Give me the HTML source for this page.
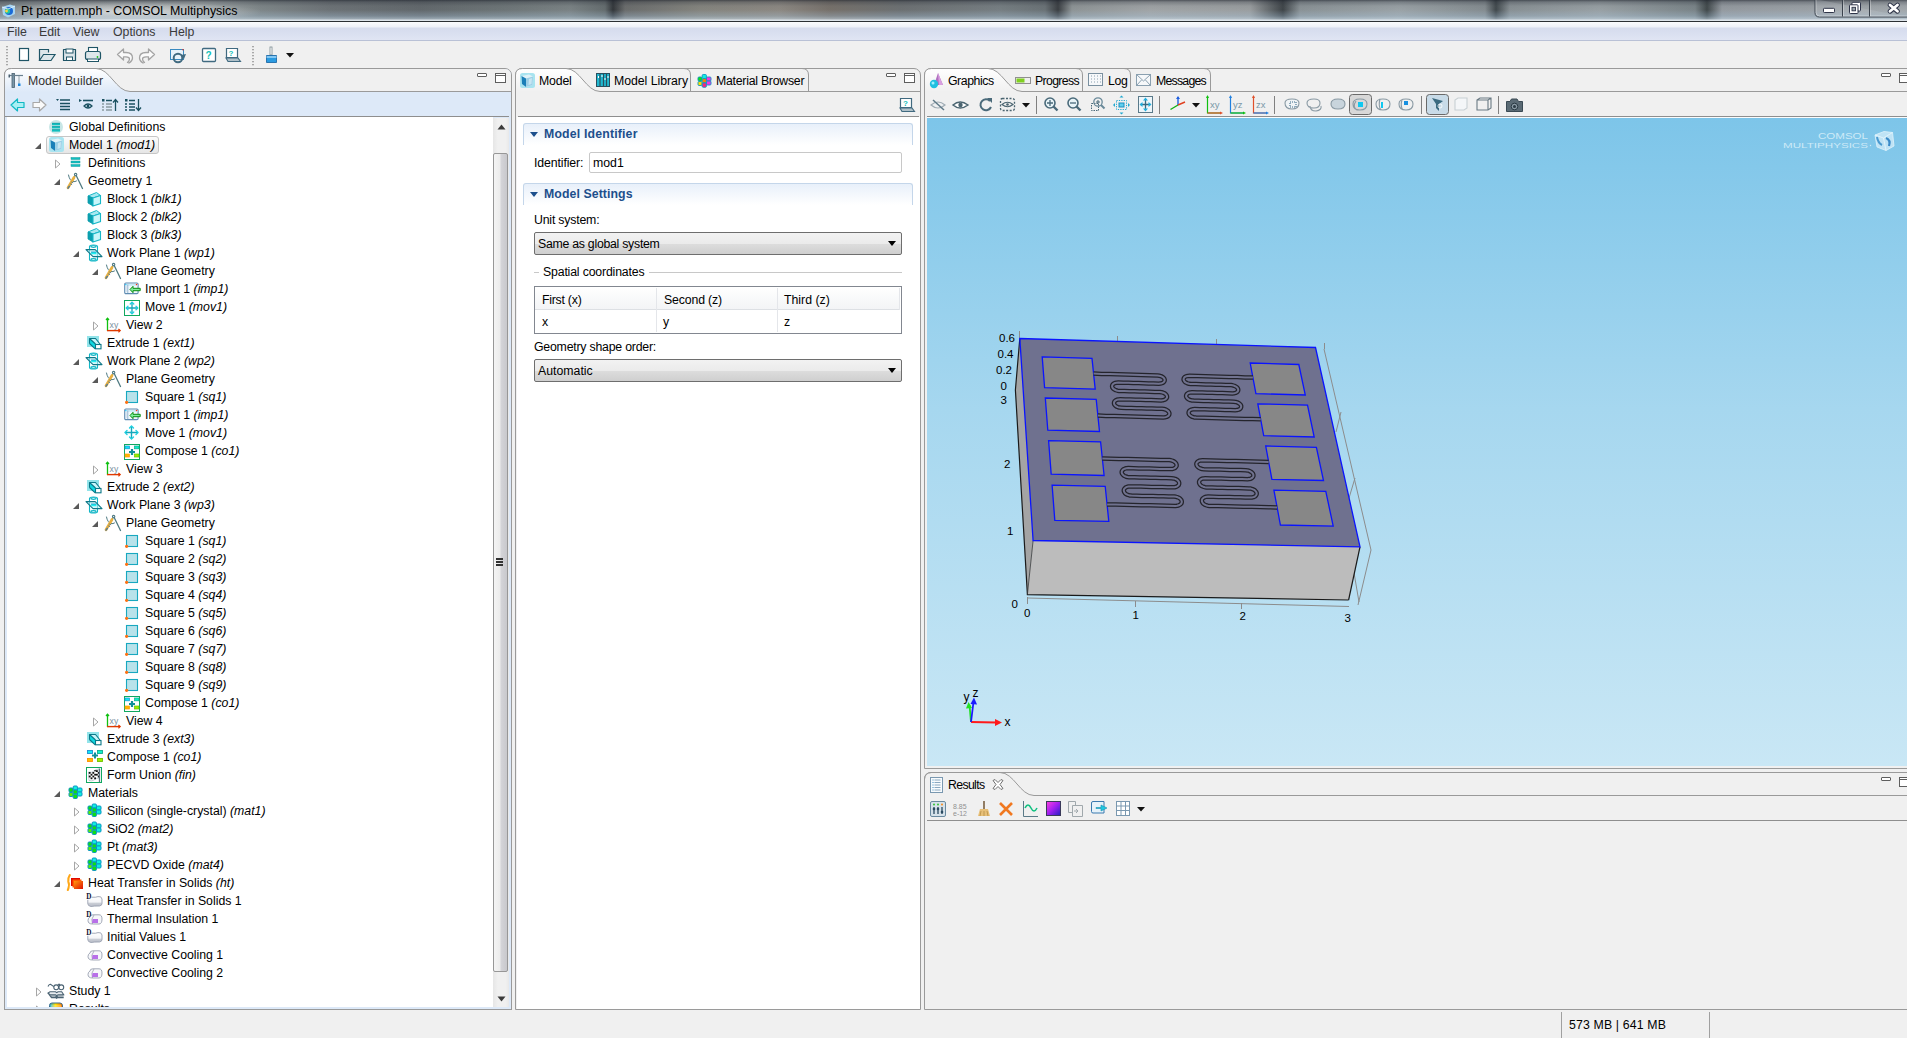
<!DOCTYPE html>
<html><head><meta charset="utf-8">
<style>
*{box-sizing:border-box;margin:0;padding:0}
html,body{width:1907px;height:1038px;overflow:hidden;background:#f0f0f0;font-family:"Liberation Sans",sans-serif;font-size:12.3px;color:#000}
.a{position:absolute}
svg.a{overflow:visible}
.t{position:absolute;white-space:pre;line-height:16px}
.row{position:absolute;height:18px;line-height:18px;white-space:pre}
.row i{font-style:italic}
.sec{position:absolute;left:523px;width:390px;height:22px;border:1px solid #c4d6ea;border-bottom:none;border-radius:3px 3px 0 0;background:linear-gradient(180deg,#e8f0fa 0%,#f6f9fd 60%,#fff 100%)}
.sec span{position:absolute;left:20px;top:3px;font-weight:bold;color:#1d4f8c;font-size:12.3px}
.sec b{position:absolute;left:6px;top:8px;width:0;height:0;border-left:4.5px solid transparent;border-right:4.5px solid transparent;border-top:5px solid #1d4f8c}
.combo{position:absolute;left:534px;width:368px;height:23px;border:1px solid #6e6e6e;border-radius:2px;background:linear-gradient(180deg,#f2f2f2 0%,#ebebeb 50%,#dddddd 51%,#cfcfcf 100%)}
.combo span{position:absolute;left:3px;top:4px}
.combo b{position:absolute;right:5px;top:8px;width:0;height:0;border-left:4px solid transparent;border-right:4px solid transparent;border-top:5px solid #000}
</style></head>
<body>
<svg width="0" height="0" style="position:absolute"><defs>
<linearGradient id="tabgradB" x1="0" y1="0" x2="0" y2="1"><stop offset="0" stop-color="#ffffff"/><stop offset="1" stop-color="#dde9f8"/></linearGradient>
<linearGradient id="tabgradG" x1="0" y1="0" x2="0" y2="1"><stop offset="0" stop-color="#ffffff"/><stop offset="1" stop-color="#f0f0f0"/></linearGradient>
<linearGradient id="canvas" x1="0" y1="0" x2="0" y2="1"><stop offset="0" stop-color="#7dc4e8"/><stop offset="1" stop-color="#c9e7f5"/></linearGradient>

<linearGradient id="gHT" x1="0" y1="0" x2="1" y2="1"><stop offset="0" stop-color="#ff9a10"/><stop offset="1" stop-color="#e01000"/></linearGradient>
<linearGradient id="gPill" x1="0" y1="0" x2="0" y2="1"><stop offset="0" stop-color="#ffffff"/><stop offset="0.55" stop-color="#f4f5f8"/><stop offset="0.7" stop-color="#c8ccd4"/><stop offset="1" stop-color="#b8bcc8"/></linearGradient>
<symbol id="i-gdef" viewBox="0 0 16 16" overflow="visible"><circle cx="7" cy="8" r="7" fill="#c8e6e6"/><rect x="3" y="4" width="8" height="2.2" fill="#10c0c0"/><rect x="3" y="7.2" width="8" height="2.2" fill="#10c0c0"/><rect x="3" y="10.4" width="8" height="2.2" fill="#10c0c0"/><path d="M3 4.2h8M3 7.4h8M3 10.6h8" stroke="#1a8f9a" stroke-width="0.6"/></symbol>
<symbol id="i-model" viewBox="0 0 16 16" overflow="visible"><rect x="0" y="0" width="15" height="15" rx="2.5" fill="#a8e4f0"/><path d="M1.5 3 L9 1.5 L13 3.5 L12.5 12 L6 14 L2 11 Z" fill="#e0f2f8"/><path d="M1.5 3 L6 5.5 L6 14 L2 11 Z" fill="#1a7fb8"/><path d="M6 5.5 L13 3.5 L12.5 12 L6 14 Z" fill="#9ccfe6"/><path d="M9 6 L12 5 L11.5 11 L8.5 12 Z" fill="#c8e6f2"/></symbol>
<symbol id="i-defs" viewBox="0 0 16 16" overflow="visible"><g fill="#10c0c0" stroke="#1a9aa0" stroke-width="0.5"><rect x="3" y="2.5" width="9" height="2"/><rect x="3" y="6" width="9" height="2"/><rect x="3" y="9.5" width="9" height="2"/></g></symbol>
<symbol id="i-geom" viewBox="0 0 16 16" overflow="visible"><g stroke="#4f7a82" fill="none" stroke-linecap="round"><circle cx="7.6" cy="1.6" r="1.2" stroke-width="1.1"/><path d="M8.3 2.8 L14.5 15.5" stroke-width="1.3"/><path d="M0.5 2 Q1.5 7.5 5 8.5 Q7 9 8.5 8" stroke-width="1"/><path d="M7 2.7 L6 5" stroke-width="1.1"/></g><path d="M6 4.5 L0 14.8" stroke="#e8b040" stroke-width="2.7" stroke-linecap="round"/><path d="M3.3 8.9 L5.2 9.8 M2.2 10.8 L4.1 11.7" stroke="#4f7a9a" stroke-width="0.9"/><path d="M0 15.2 L1.3 13.3" stroke="#4f7a9a" stroke-width="1.4" stroke-linecap="round"/></symbol>
<symbol id="i-block" viewBox="0 0 16 16" overflow="visible"><path d="M1 5 L9.5 1.5 L13.5 4.5 L6 7 Z" fill="#a8e8f0" stroke="#18b8c8" stroke-width="1"/><path d="M1 5 L6 7 L6 15 L1 12 Z" fill="#0aa0b0" stroke="#0a9aa8" stroke-width="0.8"/><path d="M6 7 L13.5 4.5 L13.5 12.5 L6 15 Z" fill="#c8f6fa" stroke="#18b8c8" stroke-width="1.1"/></symbol>
<symbol id="i-wp" viewBox="0 0 16 16" overflow="visible"><g fill="none" stroke="#12b6c6" stroke-width="1.1"><path d="M2.5 1.5 Q2.5 0 6.5 0 Q10.5 0 10.5 1.5 V14.5 Q10.5 16 6.5 16 Q2.5 16 2.5 14.5 Z"/><ellipse cx="6.5" cy="1.6" rx="2.6" ry="0.9"/><ellipse cx="6.5" cy="14.4" rx="2.6" ry="0.9"/></g><path d="M-1 4.6 H8.2 L15 11.6 H6 Z" fill="#b8f0f6" fill-opacity="0.55" stroke="#127888" stroke-width="1.1" stroke-linejoin="round"/><rect x="4.2" y="7" width="5.2" height="2.2" fill="#20f0f0"/><path d="M4 7 H9.5" stroke="#1a90c0" stroke-width="0.8"/></symbol>
<symbol id="i-import" viewBox="0 0 16 16" overflow="visible"><rect x="-0.3" y="2" width="13.4" height="10.6" rx="1.2" fill="#f2f8fc" stroke="#5f8cb2" stroke-width="1.1"/><path d="M0.5 3 H12.5 V4.8 H0.5 Z" fill="#c8eaf6"/><path d="M2.8 3.5 V12" stroke="#8aaccc" stroke-width="0.9"/><path d="M0.6 5 L1.9 6 L0.6 7 L1.9 8 L0.6 9 L1.9 10 L0.6 11" stroke="#c0d4e4" stroke-width="0.6" fill="none"/><circle cx="0.8" cy="3.6" r="0.7" fill="#10c0ff"/><circle cx="11.6" cy="3.5" r="0.8" fill="#ff3010"/><path d="M5 8.5 L8 5.3 V7.3 H15.2 V9.7 H8 V11.7 Z" fill="#80f0a0" stroke="#0a8a10" stroke-width="1"/></symbol>
<symbol id="i-move" viewBox="0 0 16 16" overflow="visible"><g stroke="#14a8bc" fill="none" stroke-width="1.4" stroke-linecap="round" stroke-linejoin="round"><path d="M6.5 1.5 V13.5 M0.5 7.5 H12.5"/><path d="M4.5 3 L6.5 1 L8.5 3 M4.5 12 L6.5 14 L8.5 12 M2 5.5 L0 7.5 L2 9.5 M11 5.5 L13 7.5 L11 9.5" stroke="#20d0e0"/></g></symbol>
<symbol id="i-movef" viewBox="0 0 16 16" overflow="visible"><rect x="-0.5" y="1.5" width="15" height="15" fill="#fff" stroke="#10a860" stroke-width="1"/><g stroke="#14a8bc" fill="none" stroke-width="1.3" stroke-linecap="round" stroke-linejoin="round"><path d="M7 3.5 V14.5 M1.5 9 H12.5"/><path d="M5.2 5 L7 3.2 L8.8 5 M5.2 13 L7 14.8 L8.8 13 M3 7.2 L1.2 9 L3 10.8 M11 7.2 L12.8 9 L11 10.8" stroke="#20d0e0"/></g></symbol>
<symbol id="i-view" viewBox="0 0 16 16" overflow="visible"><path d="M1.5 1.5 V13.8" stroke="#10c010" stroke-width="1.3"/><path d="M0 3 L1.5 1.2 L3 3" stroke="#10c010" stroke-width="1.2" fill="none"/><path d="M1 13.6 H14" stroke="#e03a00" stroke-width="1.4"/><path d="M12.4 12 L14.2 13.6 L12.4 15.2" stroke="#e03a00" stroke-width="1.2" fill="none"/><text x="3.6" y="11.3" font-family="Liberation Sans" font-size="8.6" fill="#7890a0">xy</text></symbol>
<symbol id="i-extr" viewBox="0 0 16 16" overflow="visible"><rect x="0" y="1" width="12" height="11" fill="#92e4ea"/><path d="M2.5 3.5 H8.5 L13 9 L11 13.5 L8.5 13.5 Z" fill="#c8f6fa"/><path d="M2.5 3.5 V8.5 L8 13.5 L8.5 9 Z" fill="#10d8e0"/><path d="M2.5 8.5 V3.5 H8.5 L13 9 M2.5 3.5 L8.5 9 M2.5 8.5 L8.2 13.8" stroke="#0a7888" stroke-width="1.1" fill="none" stroke-linejoin="round"/><rect x="8.5" y="9.5" width="5.5" height="4.3" fill="#fff" stroke="#0a7888" stroke-width="1.1"/></symbol>
<symbol id="i-square" viewBox="0 0 16 16" overflow="visible"><rect x="1.5" y="2.5" width="11" height="11" fill="#b8e2ea" stroke="#18a8c0" stroke-width="1.1"/><circle cx="1.6" cy="13.3" r="1.6" fill="#ff7010"/></symbol>
<symbol id="i-compf" viewBox="0 0 16 16" overflow="visible"><rect x="-0.5" y="1.5" width="15" height="15" fill="#fff" stroke="#10a860" stroke-width="1"/><rect x="0" y="3" width="4.5" height="2.8" fill="#10e8f8" stroke="#1a90d0" stroke-width="0.7"/><rect x="9.5" y="3" width="4.5" height="2.8" fill="#10f0c8" stroke="#10a890" stroke-width="0.7"/><rect x="0" y="11" width="4.5" height="3" fill="#ffb800" stroke="#ff9a00" stroke-width="0.7"/><rect x="9.5" y="11" width="4.5" height="3" fill="#9af000" stroke="#70c000" stroke-width="0.7"/><path d="M7 6 V12 M4 9 H10" stroke="#10909a" stroke-width="2.2"/></symbol>
<symbol id="i-comp" viewBox="0 0 16 16" overflow="visible"><rect x="0.5" y="1.5" width="5" height="3" fill="#10e8f8" stroke="#1a90d0" stroke-width="0.9"/><rect x="10.5" y="1.5" width="5" height="3" fill="#10f0c8" stroke="#10a890" stroke-width="0.9"/><rect x="0.5" y="9.5" width="5" height="3" fill="#ffc000" stroke="#ff9000" stroke-width="0.9"/><rect x="10.5" y="9.5" width="5" height="3" fill="#a0f000" stroke="#70c000" stroke-width="0.9"/><path d="M8 3.5 V9.5 M5 6.5 H11" stroke="#10909a" stroke-width="2"/></symbol>
<symbol id="i-union" viewBox="0 0 16 16" overflow="visible"><rect x="-0.5" y="0.5" width="15" height="15" fill="#fff" stroke="#10a860" stroke-width="1"/><path d="M1.5 5 Q5 6 7 4 Q9 2 12 2 V11 Q9 11 7 13 Q5 14.5 2 13.5 Z" fill="#fff" stroke="#9aaab8" stroke-width="0.6"/><g fill="#111"><rect x="1.8" y="5" width="1.8" height="1.8"/><rect x="5.4" y="5" width="1.8" height="1.8"/><rect x="3.6" y="6.8" width="1.8" height="1.8"/><rect x="7.2" y="6.8" width="1.8" height="1.8"/><rect x="9" y="3.2" width="1.8" height="1.8"/><rect x="1.8" y="8.6" width="1.8" height="1.8"/><rect x="5.4" y="8.6" width="1.8" height="1.8"/><rect x="9" y="6.8" width="1.8" height="1.8"/><rect x="3.6" y="10.4" width="1.8" height="1.8"/><rect x="7.2" y="10.4" width="1.8" height="1.8"/><rect x="10.8" y="5" width="1.2" height="1.8"/><rect x="10.8" y="8.6" width="1.2" height="1.8"/><rect x="7.2" y="3.2" width="1.8" height="1.2"/></g><path d="M12.5 1.5 V15" stroke="#5a7080" stroke-width="1.3"/></symbol>
<symbol id="i-mat" viewBox="0 0 16 16" overflow="visible"><g stroke="#0a94c4" stroke-width="1"><rect x="1" y="3" width="4" height="4" rx="1" fill="#10e010"/><rect x="1" y="7.5" width="4" height="4" rx="1" fill="#60f000"/><rect x="5.2" y="1" width="4.2" height="4" rx="1" fill="#10f0e0"/><rect x="5.2" y="5" width="4.2" height="4" rx="1" fill="#10e010"/><rect x="5.2" y="9.2" width="4.2" height="4.3" rx="1" fill="#10e010"/><rect x="9.5" y="3" width="4.5" height="4" rx="1" fill="#10f0e0"/><rect x="9.5" y="7" width="4.5" height="4" rx="1" fill="#10f0e0"/></g></symbol>
<symbol id="i-mat2" viewBox="0 0 16 16" overflow="visible"><g stroke="#0a94c4" stroke-width="0.9"><rect x="1" y="4" width="4" height="4" rx="1" fill="#10e010"/><rect x="1" y="8.5" width="4" height="4" rx="1" fill="#ffe000"/><rect x="5.2" y="1.5" width="4.2" height="4" rx="1" fill="#10f0e0"/><rect x="5.2" y="5.7" width="4.2" height="4" rx="1" fill="#ff8000"/><rect x="5.2" y="10" width="4.2" height="4.3" rx="1" fill="#ff2080"/><rect x="9.5" y="4" width="4.5" height="4" rx="1" fill="#ff30e0"/><rect x="9.5" y="8" width="4.5" height="4" rx="1" fill="#ff30e0"/></g></symbol>
<symbol id="i-ht" viewBox="0 0 16 16" overflow="visible"><path d="M1.8 0 Q-0.2 3 0.3 6.5 Q1.6 9.5 0.6 12.5 Q0.3 14 -0.2 15" stroke="#ffa818" stroke-width="2.1" fill="none" stroke-linecap="round"/><rect x="3" y="3" width="9" height="8" fill="#e00800"/><rect x="4.5" y="4.5" width="9" height="8" fill="#ff5a00"/><rect x="6" y="6" width="9" height="8" fill="url(#gHT)"/></symbol>
<symbol id="i-htd" viewBox="0 0 16 16" overflow="visible"><path d="M4.5 4.2 Q9 4.6 11 3.6 Q14.5 3 15 6 V10.5 Q15 12.5 12.5 13 Q7 12.8 4 13.5 Q1 13 0.8 10.8 V6.8" fill="url(#gPill)" stroke="#9aa0b0" stroke-width="0.9"/><text x="-0.8" y="6.4" font-family="Liberation Serif" font-weight="bold" font-size="7.2" fill="#0a1030">D</text></symbol>
<symbol id="i-htdp" viewBox="0 0 16 16" overflow="visible"><path d="M3 6 Q3 3.8 6 3.8 H12 Q15 3.8 15 8 Q15 13 12 13 H5.5 Q1 13 1 9.5 Q1 7 3 6 Z" fill="#f6f7fa" stroke="#9aa0b0" stroke-width="0.9"/><path d="M7 4 Q3.5 8 5.5 13" stroke="#9aa0b0" stroke-width="0.8" fill="none"/><path d="M5.5 8 H11 V12 H5 Z" fill="#b870e8"/><text x="-0.8" y="6.4" font-family="Liberation Serif" font-weight="bold" font-size="7.2" fill="#0a1030">D</text></symbol>
<symbol id="i-htp" viewBox="0 0 16 16" overflow="visible"><path d="M3 6 Q3 3.8 6 3.8 H12 Q15 3.8 15 8 Q15 13 12 13 H5.5 Q1 13 1 9.5 Q1 7 3 6 Z" fill="#f6f7fa" stroke="#9aa0b0" stroke-width="0.9"/><path d="M7 4 Q3.5 8 5.5 13" stroke="#9aa0b0" stroke-width="0.8" fill="none"/><path d="M5.5 8 H11 V12 H5 Z" fill="#b870e8"/></symbol>
<symbol id="i-study" viewBox="0 0 16 16" overflow="visible"><g stroke="#4a6272" fill="none" stroke-width="1.1"><path d="M-1 3.5 Q0 1 1.5 1.2 L4.8 3.6"/><circle cx="7.2" cy="4.3" r="2.4"/><circle cx="12.3" cy="4.3" r="2.4"/><path d="M8.8 2.4 Q9.6 0.2 11 1.9"/><path d="M1 8.7 H6.5 L7.8 9.6 L9 8.7 H12.7 L14.7 11.8 H9 L7.8 12.6 L6.6 11.8 H1 L-1 10 Z" fill="#e8ecf0"/><path d="M-1 10 L1.5 13 H6.5 L7.6 14 L8.7 13 H14.7 M0 11.5 L2.5 14.6 H6.5 L7.6 15.4 L8.7 14.6 H14.7"/></g></symbol>
<linearGradient id="gRes" x1="0" y1="0" x2="1" y2="0"><stop offset="0" stop-color="#10a8f0"/><stop offset="0.45" stop-color="#ffe000"/><stop offset="1" stop-color="#ff7000"/></linearGradient><symbol id="i-results" viewBox="0 0 16 16" overflow="visible"><path d="M0.5 16 V4.5 Q0.5 2 3 2 H11 Q13.5 2 13.5 5 V16 Z" fill="url(#gRes)" stroke="#3a6a8a" stroke-width="1"/><path d="M2 5 H12" stroke="#fff" stroke-width="0.8" opacity="0.6"/></symbol>
<symbol id="exp" viewBox="0 0 8 8" overflow="visible"><path d="M1 7 L7 1 L7 7 Z" fill="#595959"/></symbol>
<symbol id="col" viewBox="0 0 8 10" overflow="visible"><path d="M1.5 1 L6 5 L1.5 9 Z" fill="#fff" stroke="#a6a6a6" stroke-width="1"/></symbol>

</defs></svg>

<div class="a" style="left:0;top:0;width:1907px;height:22px;background:linear-gradient(90deg,#7c8488 0px,#949a9c 60px,#a2a8aa 200px,#7e8688 260px,#6c7276 330px,#62686c 420px,#6c7476 500px,#7a8284 570px,#646c6e 605px,#32363a 613px,#6a6c6c 625px,#84847e 700px,#8c8882 780px,#76706a 830px,#6c7072 900px,#767e82 1000px,#6a7276 1045px,#3a3e42 1058px,#8e9496 1072px,#a0a4a6 1150px,#9a9ea0 1250px,#3e4448 1283px,#8a9296 1300px,#9aa2a6 1400px,#848c90 1485px,#40484c 1496px,#889094 1510px,#98a0a4 1600px,#7a8488 1695px,#40484a 1707px,#949aa0 1722px,#a2a8ac 1907px)"></div>
<div class="a" style="left:0;top:0;width:1907px;height:22px;background:linear-gradient(180deg,rgba(25,30,40,.6) 0px,rgba(40,45,55,.3) 2px,rgba(80,85,90,.08) 6px,rgba(255,255,255,0) 10px,rgba(170,200,225,.3) 16px,rgba(200,220,235,.55) 19px,rgba(235,240,245,.9) 20px,#dde4ea 20px,#dde4ea 21px,#2c3034 21px,#2c3034 22px)"></div>
<div class="a" style="left:0;top:2px;width:260px;height:19px;background:radial-gradient(ellipse 140px 10px at 125px 10px,rgba(255,255,255,.55),rgba(255,255,255,0))"></div>

<svg class="a" style="left:1px;top:4px" width="15" height="14" viewBox="0 0 15 14"><path d="M1 3 L9 0.5 L14 2 L14 10 L7 13.5 L2 11 Z" fill="#a8d4f0"/><circle cx="8" cy="7" r="4" fill="#1a6ad8"/><circle cx="6.5" cy="7" r="2.6" fill="#20c8a0"/><circle cx="5.5" cy="7" r="1.4" fill="#ffd040"/><path d="M1 3 L7 5 L14 2" stroke="#e8f4fc" stroke-width="0.8" fill="none"/></svg>
<span class="t" style="left:21px;top:3px;color:#000;font-size:12.4px">Pt pattern.mph - COMSOL Multiphysics</span>
<svg class="a" style="left:1800px;top:0" width="107" height="22" viewBox="1800 0 107 22">
<path d="M1815,-1 V12.5 Q1815,17 1819.5,17 H1907" fill="rgba(210,215,220,0.18)" stroke="#3a424c" stroke-width="1"/>
<path d="M1816,-1 V12.5 Q1816,16 1819.5,16 H1907" fill="none" stroke="rgba(255,255,255,0.45)" stroke-width="0.8"/>
<path d="M1842.5,0 V16.5 M1869.5,0 V16.5" stroke="#3a424c" stroke-width="1"/><path d="M1843.5,0 V16 M1870.5,0 V16" stroke="rgba(255,255,255,0.4)" stroke-width="0.8"/>
<rect x="1823.5" y="8.3" width="11" height="4.2" rx="0.8" fill="#fff" stroke="#2e3448" stroke-width="1"/>
<rect x="1852" y="2.3" width="8.5" height="8.7" rx="0.8" fill="#fff" stroke="#2e3448" stroke-width="1"/>
<rect x="1849.5" y="4.8" width="8.5" height="8.7" rx="0.8" fill="#fff" stroke="#2e3448" stroke-width="1"/>
<rect x="1852" y="7.3" width="3.5" height="3.5" fill="#9aa4aa" stroke="#2e3448" stroke-width="0.9"/>
<path d="M1890,5 L1897.5,11.3 M1897.5,5 L1890,11.3" stroke="#2e3448" stroke-width="4.8" stroke-linecap="round"/>
<path d="M1890,5 L1897.5,11.3 M1897.5,5 L1890,11.3" stroke="#fff" stroke-width="2.8" stroke-linecap="round"/>
</svg>
<div class="a" style="left:0;top:22px;width:1907px;height:19px;background:linear-gradient(180deg,#fbfcfe 0px,#eef1f8 5px,#d6dcee 6px,#dae0f0 12px,#e0e5f3 18px);border-bottom:1px solid #b9c1d6"></div>
<span class="t" style="left:7px;top:24px;color:#3a3a3a">File</span>
<span class="t" style="left:39px;top:24px;color:#3a3a3a">Edit</span>
<span class="t" style="left:73px;top:24px;color:#3a3a3a">View</span>
<span class="t" style="left:113px;top:24px;color:#3a3a3a">Options</span>
<span class="t" style="left:169px;top:24px;color:#3a3a3a">Help</span>
<svg class="a" style="left:0;top:41px" width="300" height="27" viewBox="0 41 300 27">
<g fill="#a8a8a8"><rect x="6" y="46" width="2" height="1.3"/><rect x="6" y="49" width="2" height="1.3"/><rect x="6" y="52" width="2" height="1.3"/><rect x="6" y="55" width="2" height="1.3"/><rect x="6" y="58" width="2" height="1.3"/><rect x="6" y="61" width="2" height="1.3"/><rect x="6" y="64" width="2" height="1.3"/>
<rect x="252" y="46" width="2" height="1.3"/><rect x="252" y="49" width="2" height="1.3"/><rect x="252" y="52" width="2" height="1.3"/><rect x="252" y="55" width="2" height="1.3"/><rect x="252" y="58" width="2" height="1.3"/><rect x="252" y="61" width="2" height="1.3"/><rect x="252" y="64" width="2" height="1.3"/></g>
<rect x="19.5" y="48.5" width="9" height="12" fill="#fff" stroke="#1f5566" stroke-width="1.2"/>
<path d="M39.5,60.5 V49.5 H48.5 V52.5 M39.5,60.5 L43.5,54.5 H55 L51,60.5 Z" fill="#dde6ea" stroke="#1f5566" stroke-width="1.2"/>
<path d="M63.5,49.5 H75.5 V60.5 H63.5 Z" fill="#dde6ea" stroke="#1f5566" stroke-width="1.2" stroke-linejoin="round"/><rect x="66" y="49" width="7" height="4" fill="#fff" stroke="#1f5566"/><rect x="66.5" y="57" width="6" height="3.5" fill="#fff" stroke="#1f5566"/>
<rect x="88.5" y="47.5" width="9" height="5" fill="#fff" stroke="#1f5566" stroke-width="1.1"/><rect x="85.5" y="51.5" width="15" height="8" rx="2" fill="#dde6ea" stroke="#1f5566" stroke-width="1.2"/><rect x="87.5" y="59" width="11" height="2.5" fill="#fff" stroke="#1f5566"/><circle cx="97.5" cy="57" r="0.9" fill="#20c020"/>
<path d="M123.5,49 L117.5,54.5 L123.5,60 V56.8 H126 Q129.5,56.8 129.5,59 Q129.5,61 127.5,62.5 L129,63 Q132.5,61 132.5,58 Q132.5,52.5 126,52.5 H123.5 Z" fill="#fafafa" stroke="#a4a4a4" stroke-width="1.3" stroke-linejoin="round"/>
<path d="M148.5,49 L154.5,54.5 L148.5,60 V56.8 H146 Q142.5,56.8 142.5,59 Q142.5,61 144.5,62.5 L143,63 Q139.5,61 139.5,58 Q139.5,52.5 146,52.5 H148.5 Z" fill="#fafafa" stroke="#a4a4a4" stroke-width="1.3" stroke-linejoin="round"/>
<rect x="170.5" y="49.5" width="13" height="10" fill="#e8f2fa" stroke="#3a8ac0"/><circle cx="178" cy="58" r="4.3" fill="none" stroke="#406a80" stroke-width="2"/><path d="M181,55 L186,54 L184,59 Z" fill="#406a80"/><circle cx="183" cy="49.8" r="0.8" fill="#e03020"/>
<rect x="202.5" y="48.5" width="13" height="13" rx="1" fill="#fff" stroke="#406a80" stroke-width="1.3"/><text x="205.5" y="59" font-family="Liberation Sans" font-weight="bold" font-size="10" fill="#10c0b8">?</text>
<path d="M226.5,48.5 H237.5 V57.5 H226.5 Z" fill="#fff" stroke="#406a80" stroke-width="1.2"/><path d="M226,58 H238 L240.5,61.5 H228 Z" fill="#b0c0c8" stroke="#406a80" stroke-width="1.1"/><text x="228.5" y="56" font-family="Liberation Sans" font-weight="bold" font-size="8" fill="#10c0b8">?</text>
<rect x="270" y="47" width="2" height="8" fill="#fff" stroke="#7a8a90" stroke-width="0.8"/><path d="M266.5,55.5 H276.5 V62.5 H266.5 Z" fill="#2a9ae0" stroke="#1060a0" stroke-width="0.8"/><path d="M266.5,57 H276.5" stroke="#c0e6ff" stroke-width="1.2"/>
<path d="M286,53 H294 L290,57.5 Z" fill="#111"/>

</svg>
<div class="a" style="left:4px;top:68px;width:508px;height:942px;border:1px solid #9a9a9a;border-radius:7px 7px 0 0;background:#dde9f8"></div>
<div class="a" style="left:5px;top:69px;width:506px;height:23px;border-radius:6px 6px 0 0;background:#f0f0f0"></div>
<svg class="a" style="left:0;top:0" width="520" height="120"><path d="M4.5,92 L4.5,75 Q4.5,68.5 11.5,68.5 L96,68.5 C110,68.5 116,91.5 130,91.5 L130,92 Z" fill="url(#tabgradB)" stroke="none"/><path d="M4.5,92 V75 Q4.5,68.5 11.5,68.5 H96 C110,68.5 116,91.5 130,91.5" stroke="#9a9a9a" fill="none"/><path d="M130,91.5 L511,91.5" stroke="#9a9a9a" fill="none"/><rect x="5" y="92" width="506" height="24" fill="#dde9f8"/><path d="M5,116.5 H509" stroke="#8e8e8e"/></svg>
<svg class="a" style="left:8px;top:73px" width="16" height="16" viewBox="0 0 16 16"><rect x="4" y="0.5" width="2.5" height="14" fill="#7a96a8" stroke="#4a6070" stroke-width="0.8"/><path d="M1 2.5 H15" stroke="#6a8090" stroke-width="1.2"/><rect x="0.5" y="1.5" width="1.5" height="3" fill="#4a6070"/><path d="M11 3 V11" stroke="#7a8a96" stroke-width="0.8"/><rect x="10" y="10.5" width="2.5" height="2.5" fill="#1a88e0"/></svg>
<span class="t" style="left:28px;top:73px;color:#333">Model Builder</span>
<div class="a" style="left:477px;top:73px;width:10px;height:4px;border:1px solid #5e5e5e;border-radius:1px;background:#fff"></div><div class="a" style="left:495px;top:73px;width:11px;height:10px;border:1px solid #5e5e5e;background:#fff"></div><div class="a" style="left:495px;top:75px;width:11px;height:1px;background:#5e5e5e"></div>
<svg class="a" style="left:0;top:92px" width="150" height="24" viewBox="0 92 150 24">
<path d="M11,105 L17.5,99 V102.5 H24 V107.5 H17.5 V111 Z" fill="#a8f0f4" stroke="#12b8c4" stroke-width="1.2" stroke-linejoin="round"/>
<path d="M46,105 L39.5,99 V102.5 H33 V107.5 H39.5 V111 Z" fill="#fafafa" stroke="#a8a8a8" stroke-width="1.2" stroke-linejoin="round"/>
<path d="M56,99 L59,99 L57.5,101 Z" fill="#1a5060"/><path d="M60,100 H70 M60,103.5 H70 M60,106.5 H70 M60,109.5 H70" stroke="#1a5060" stroke-width="1.5"/>
<path d="M79,99 L82,100.5 L79,102 Z" fill="#1a5060"/><path d="M83,100.5 H93" stroke="#1a5060" stroke-width="1.6"/><path d="M84,106 Q88,102 92,106 Q88,110 84,106 Z" fill="none" stroke="#1a5060" stroke-width="1.2"/><circle cx="88" cy="106" r="1.3" fill="#1a5060"/>
<rect x="102" y="99" width="2.5" height="2.5" fill="#1a5060"/><path d="M106,100.5 H112" stroke="#1a5060" stroke-width="1.5"/><path d="M102,104 H104 M102,107 H104 M102,110 H104 M106,104 H112 M106,107 H112 M106,110 H112" stroke="#8a9aa0" stroke-width="1.4"/><path d="M115.5,111 V100 M113,102.5 L115.5,99.5 L118,102.5" stroke="#1a5060" stroke-width="1.3" fill="none"/>
<rect x="125" y="99" width="2.5" height="2.5" fill="#1a5060"/><path d="M129,100.5 H135 M125,104 H127 M125,107 H127 M125,110 H127 M129,104 H135 M129,107 H135 M129,110 H135" stroke="#1a5060" stroke-width="1.5"/><path d="M138.5,99 V110 M136,107.5 L138.5,110.5 L141,107.5" stroke="#1a5060" stroke-width="1.3" fill="none"/>
</svg>
<div class="a" style="left:7px;top:117px;width:486px;height:890px;background:#fff"></div>
<div class="a" style="left:493px;top:118px;width:16px;height:889px;background:linear-gradient(90deg,#e6e6e6,#f0f0f0 30%,#f0f0f0 80%,#e8e8e8)"></div>
<svg class="a" style="left:497px;top:124px" width="9" height="6"><path d="M0.5,5.5 L4.5,0.5 L8.5,5.5 Z" fill="#3a3a3a"/></svg>
<svg class="a" style="left:497px;top:996px" width="9" height="6"><path d="M0.5,0.5 L4.5,5.5 L8.5,0.5 Z" fill="#3a3a3a"/></svg>
<div class="a" style="left:493px;top:153px;width:15px;height:819px;border:1px solid #979797;border-radius:2px;background:linear-gradient(90deg,#f4f4f4 0%,#ececec 45%,#d4d4d8 55%,#c8c8cc 100%)"></div>
<div class="a" style="left:496px;top:558px;width:7px;height:1.5px;background:#333"></div><div class="a" style="left:496px;top:561px;width:7px;height:1.5px;background:#333"></div><div class="a" style="left:496px;top:564px;width:7px;height:1.5px;background:#333"></div>

<div class="a" style="left:46px;top:136px;width:113px;height:18px;border:1px solid #c6c6c6;border-radius:3px;background:linear-gradient(180deg,#fcfcfc,#e6e6e6)"></div>
<svg class="a" style="left:49px;top:119px" width="16" height="16"><use href="#i-gdef"/></svg>
<span class="row" style="left:69px;top:118px">Global Definitions<i></i></span>
<svg class="a" style="left:34px;top:142px" width="8" height="8"><use href="#exp"/></svg>
<svg class="a" style="left:49px;top:137px" width="16" height="16"><use href="#i-model"/></svg>
<span class="row" style="left:69px;top:136px">Model 1 <i>(mod1)</i></span>
<svg class="a" style="left:54px;top:159px" width="8" height="10"><use href="#col"/></svg>
<svg class="a" style="left:68px;top:155px" width="16" height="16"><use href="#i-defs"/></svg>
<span class="row" style="left:88px;top:154px">Definitions<i></i></span>
<svg class="a" style="left:53px;top:178px" width="8" height="8"><use href="#exp"/></svg>
<svg class="a" style="left:68px;top:173px" width="16" height="16"><use href="#i-geom"/></svg>
<span class="row" style="left:88px;top:172px">Geometry 1<i></i></span>
<svg class="a" style="left:87px;top:191px" width="16" height="16"><use href="#i-block"/></svg>
<span class="row" style="left:107px;top:190px">Block 1 <i>(blk1)</i></span>
<svg class="a" style="left:87px;top:209px" width="16" height="16"><use href="#i-block"/></svg>
<span class="row" style="left:107px;top:208px">Block 2 <i>(blk2)</i></span>
<svg class="a" style="left:87px;top:227px" width="16" height="16"><use href="#i-block"/></svg>
<span class="row" style="left:107px;top:226px">Block 3 <i>(blk3)</i></span>
<svg class="a" style="left:72px;top:250px" width="8" height="8"><use href="#exp"/></svg>
<svg class="a" style="left:87px;top:245px" width="16" height="16"><use href="#i-wp"/></svg>
<span class="row" style="left:107px;top:244px">Work Plane 1 <i>(wp1)</i></span>
<svg class="a" style="left:91px;top:268px" width="8" height="8"><use href="#exp"/></svg>
<svg class="a" style="left:106px;top:263px" width="16" height="16"><use href="#i-geom"/></svg>
<span class="row" style="left:126px;top:262px">Plane Geometry<i></i></span>
<svg class="a" style="left:125px;top:281px" width="16" height="16"><use href="#i-import"/></svg>
<span class="row" style="left:145px;top:280px">Import 1 <i>(imp1)</i></span>
<svg class="a" style="left:125px;top:299px" width="16" height="16"><use href="#i-movef"/></svg>
<span class="row" style="left:145px;top:298px">Move 1 <i>(mov1)</i></span>
<svg class="a" style="left:92px;top:321px" width="8" height="10"><use href="#col"/></svg>
<svg class="a" style="left:106px;top:317px" width="16" height="16"><use href="#i-view"/></svg>
<span class="row" style="left:126px;top:316px">View 2<i></i></span>
<svg class="a" style="left:87px;top:335px" width="16" height="16"><use href="#i-extr"/></svg>
<span class="row" style="left:107px;top:334px">Extrude 1 <i>(ext1)</i></span>
<svg class="a" style="left:72px;top:358px" width="8" height="8"><use href="#exp"/></svg>
<svg class="a" style="left:87px;top:353px" width="16" height="16"><use href="#i-wp"/></svg>
<span class="row" style="left:107px;top:352px">Work Plane 2 <i>(wp2)</i></span>
<svg class="a" style="left:91px;top:376px" width="8" height="8"><use href="#exp"/></svg>
<svg class="a" style="left:106px;top:371px" width="16" height="16"><use href="#i-geom"/></svg>
<span class="row" style="left:126px;top:370px">Plane Geometry<i></i></span>
<svg class="a" style="left:125px;top:389px" width="16" height="16"><use href="#i-square"/></svg>
<span class="row" style="left:145px;top:388px">Square 1 <i>(sq1)</i></span>
<svg class="a" style="left:125px;top:407px" width="16" height="16"><use href="#i-import"/></svg>
<span class="row" style="left:145px;top:406px">Import 1 <i>(imp1)</i></span>
<svg class="a" style="left:125px;top:425px" width="16" height="16"><use href="#i-move"/></svg>
<span class="row" style="left:145px;top:424px">Move 1 <i>(mov1)</i></span>
<svg class="a" style="left:125px;top:443px" width="16" height="16"><use href="#i-compf"/></svg>
<span class="row" style="left:145px;top:442px">Compose 1 <i>(co1)</i></span>
<svg class="a" style="left:92px;top:465px" width="8" height="10"><use href="#col"/></svg>
<svg class="a" style="left:106px;top:461px" width="16" height="16"><use href="#i-view"/></svg>
<span class="row" style="left:126px;top:460px">View 3<i></i></span>
<svg class="a" style="left:87px;top:479px" width="16" height="16"><use href="#i-extr"/></svg>
<span class="row" style="left:107px;top:478px">Extrude 2 <i>(ext2)</i></span>
<svg class="a" style="left:72px;top:502px" width="8" height="8"><use href="#exp"/></svg>
<svg class="a" style="left:87px;top:497px" width="16" height="16"><use href="#i-wp"/></svg>
<span class="row" style="left:107px;top:496px">Work Plane 3 <i>(wp3)</i></span>
<svg class="a" style="left:91px;top:520px" width="8" height="8"><use href="#exp"/></svg>
<svg class="a" style="left:106px;top:515px" width="16" height="16"><use href="#i-geom"/></svg>
<span class="row" style="left:126px;top:514px">Plane Geometry<i></i></span>
<svg class="a" style="left:125px;top:533px" width="16" height="16"><use href="#i-square"/></svg>
<span class="row" style="left:145px;top:532px">Square 1 <i>(sq1)</i></span>
<svg class="a" style="left:125px;top:551px" width="16" height="16"><use href="#i-square"/></svg>
<span class="row" style="left:145px;top:550px">Square 2 <i>(sq2)</i></span>
<svg class="a" style="left:125px;top:569px" width="16" height="16"><use href="#i-square"/></svg>
<span class="row" style="left:145px;top:568px">Square 3 <i>(sq3)</i></span>
<svg class="a" style="left:125px;top:587px" width="16" height="16"><use href="#i-square"/></svg>
<span class="row" style="left:145px;top:586px">Square 4 <i>(sq4)</i></span>
<svg class="a" style="left:125px;top:605px" width="16" height="16"><use href="#i-square"/></svg>
<span class="row" style="left:145px;top:604px">Square 5 <i>(sq5)</i></span>
<svg class="a" style="left:125px;top:623px" width="16" height="16"><use href="#i-square"/></svg>
<span class="row" style="left:145px;top:622px">Square 6 <i>(sq6)</i></span>
<svg class="a" style="left:125px;top:641px" width="16" height="16"><use href="#i-square"/></svg>
<span class="row" style="left:145px;top:640px">Square 7 <i>(sq7)</i></span>
<svg class="a" style="left:125px;top:659px" width="16" height="16"><use href="#i-square"/></svg>
<span class="row" style="left:145px;top:658px">Square 8 <i>(sq8)</i></span>
<svg class="a" style="left:125px;top:677px" width="16" height="16"><use href="#i-square"/></svg>
<span class="row" style="left:145px;top:676px">Square 9 <i>(sq9)</i></span>
<svg class="a" style="left:125px;top:695px" width="16" height="16"><use href="#i-compf"/></svg>
<span class="row" style="left:145px;top:694px">Compose 1 <i>(co1)</i></span>
<svg class="a" style="left:92px;top:717px" width="8" height="10"><use href="#col"/></svg>
<svg class="a" style="left:106px;top:713px" width="16" height="16"><use href="#i-view"/></svg>
<span class="row" style="left:126px;top:712px">View 4<i></i></span>
<svg class="a" style="left:87px;top:731px" width="16" height="16"><use href="#i-extr"/></svg>
<span class="row" style="left:107px;top:730px">Extrude 3 <i>(ext3)</i></span>
<svg class="a" style="left:87px;top:749px" width="16" height="16"><use href="#i-comp"/></svg>
<span class="row" style="left:107px;top:748px">Compose 1 <i>(co1)</i></span>
<svg class="a" style="left:87px;top:767px" width="16" height="16"><use href="#i-union"/></svg>
<span class="row" style="left:107px;top:766px">Form Union <i>(fin)</i></span>
<svg class="a" style="left:53px;top:790px" width="8" height="8"><use href="#exp"/></svg>
<svg class="a" style="left:68px;top:785px" width="16" height="16"><use href="#i-mat"/></svg>
<span class="row" style="left:88px;top:784px">Materials<i></i></span>
<svg class="a" style="left:73px;top:807px" width="8" height="10"><use href="#col"/></svg>
<svg class="a" style="left:87px;top:803px" width="16" height="16"><use href="#i-mat"/></svg>
<span class="row" style="left:107px;top:802px">Silicon (single-crystal) <i>(mat1)</i></span>
<svg class="a" style="left:73px;top:825px" width="8" height="10"><use href="#col"/></svg>
<svg class="a" style="left:87px;top:821px" width="16" height="16"><use href="#i-mat"/></svg>
<span class="row" style="left:107px;top:820px">SiO2 <i>(mat2)</i></span>
<svg class="a" style="left:73px;top:843px" width="8" height="10"><use href="#col"/></svg>
<svg class="a" style="left:87px;top:839px" width="16" height="16"><use href="#i-mat"/></svg>
<span class="row" style="left:107px;top:838px">Pt <i>(mat3)</i></span>
<svg class="a" style="left:73px;top:861px" width="8" height="10"><use href="#col"/></svg>
<svg class="a" style="left:87px;top:857px" width="16" height="16"><use href="#i-mat"/></svg>
<span class="row" style="left:107px;top:856px">PECVD Oxide <i>(mat4)</i></span>
<svg class="a" style="left:53px;top:880px" width="8" height="8"><use href="#exp"/></svg>
<svg class="a" style="left:68px;top:875px" width="16" height="16"><use href="#i-ht"/></svg>
<span class="row" style="left:88px;top:874px">Heat Transfer in Solids <i>(ht)</i></span>
<svg class="a" style="left:87px;top:893px" width="16" height="16"><use href="#i-htd"/></svg>
<span class="row" style="left:107px;top:892px">Heat Transfer in Solids 1<i></i></span>
<svg class="a" style="left:87px;top:911px" width="16" height="16"><use href="#i-htdp"/></svg>
<span class="row" style="left:107px;top:910px">Thermal Insulation 1<i></i></span>
<svg class="a" style="left:87px;top:929px" width="16" height="16"><use href="#i-htd"/></svg>
<span class="row" style="left:107px;top:928px">Initial Values 1<i></i></span>
<svg class="a" style="left:87px;top:947px" width="16" height="16"><use href="#i-htp"/></svg>
<span class="row" style="left:107px;top:946px">Convective Cooling 1<i></i></span>
<svg class="a" style="left:87px;top:965px" width="16" height="16"><use href="#i-htp"/></svg>
<span class="row" style="left:107px;top:964px">Convective Cooling 2<i></i></span>
<svg class="a" style="left:35px;top:987px" width="8" height="10"><use href="#col"/></svg>
<svg class="a" style="left:49px;top:983px" width="16" height="16"><use href="#i-study"/></svg>
<span class="row" style="left:69px;top:982px">Study 1<i></i></span>
<svg class="a" style="left:35px;top:1005px" width="8" height="10"><use href="#col"/></svg>
<svg class="a" style="left:49px;top:1001px" width="16" height="16"><use href="#i-results"/></svg>
<span class="row" style="left:69px;top:1000px">Results<i></i></span>
<div class="a" style="left:5px;top:1007px;width:506px;height:2px;background:#dde9f8"></div>
<div class="a" style="left:0;top:1010px;width:520px;height:28px;background:#f0f0f0"></div>
<div class="a" style="left:4px;top:1009px;width:508px;height:1px;background:#9a9a9a"></div>
<div class="a" style="left:515px;top:68px;width:406px;height:942px;border:1px solid #9a9a9a;border-radius:7px 7px 0 0;background:#f0f0f0"></div>
<svg class="a" style="left:0;top:0" width="930" height="120"><path d="M515.5,92 L515.5,75 Q515.5,68.5 522.5,68.5 L566,68.5 C580,68.5 586,91.5 600,91.5 L600,92 Z" fill="url(#tabgradG)"/><path d="M515.5,92 V75 Q515.5,68.5 522.5,68.5 H566 C580,68.5 586,91.5 600,91.5" stroke="#9a9a9a" fill="none"/><path d="M600,91.5 L920,91.5" stroke="#9a9a9a" fill="none"/><path d="M690.5,91 V75 Q690.5,68.5 684,68.5 M808.5,91 V75 Q808.5,68.5 802,68.5" stroke="#9a9a9a" fill="none"/><path d="M518,116.5 H919" stroke="#8e8e8e"/></svg>
<svg class="a" style="left:520px;top:73px" width="16" height="16"><use href="#i-model"/></svg>
<span class="t" style="left:539px;top:73px;letter-spacing:-0.160px;">Model</span>
<svg class="a" style="left:596px;top:73px" width="14" height="14" viewBox="0 0 14 14"><rect x="0.5" y="0.5" width="13" height="13" fill="#20b8d0" stroke="#2a5060"/><path d="M4 1 V13 M7.5 1 V13 M10.5 1 V13" stroke="#2a5060" stroke-width="1.2"/><path d="M2.5 3 V5 M6 2 V4 M9 5 V7 M12 3 V5" stroke="#fff" stroke-width="1"/></svg>
<span class="t" style="left:614px;top:73px;letter-spacing:-0.038px;">Model Library</span>
<svg class="a" style="left:697px;top:73px" width="16" height="16"><use href="#i-mat2"/></svg>
<span class="t" style="left:716px;top:73px;letter-spacing:-0.248px;">Material Browser</span>
<div class="a" style="left:886px;top:73px;width:10px;height:4px;border:1px solid #5e5e5e;border-radius:1px;background:#fff"></div><div class="a" style="left:904px;top:73px;width:11px;height:10px;border:1px solid #5e5e5e;background:#fff"></div><div class="a" style="left:904px;top:75px;width:11px;height:1px;background:#5e5e5e"></div>
<svg class="a" style="left:899px;top:97px" width="16" height="16" viewBox="0 0 16 16"><path d="M1.5,1.5 H12.5 V10.5 H1.5 Z" fill="#fff" stroke="#406a80" stroke-width="1.2"/><path d="M1,11 H13 L15.5,14.5 H3 Z" fill="#b0c0c8" stroke="#406a80" stroke-width="1.1"/><text x="4" y="9" font-family="Liberation Sans" font-weight="bold" font-size="8" fill="#10c0b8">?</text></svg>
<div class="a" style="left:517px;top:117px;width:403px;height:892px;background:#fff"></div>
<div class="sec" style="top:123px"><b></b><span style="letter-spacing:0.170px;">Model Identifier</span></div>
<span class="t" style="left:534px;top:155px;letter-spacing:-0.109px;">Identifier:</span>
<div class="a" style="left:589px;top:152px;width:313px;height:21px;border:1px solid #c8c8c8;border-radius:2px;background:#fff"></div>
<span class="t" style="left:593px;top:155px">mod1</span>
<div class="sec" style="top:183px"><b></b><span style="letter-spacing:0.082px;">Model Settings</span></div>
<span class="t" style="left:534px;top:212px;letter-spacing:-0.188px;">Unit system:</span>
<div class="combo" style="top:232px"><span style="letter-spacing:-0.263px;">Same as global system</span><b></b></div>
<div class="a" style="left:534px;top:272px;width:5px;height:1px;background:#c8c8c8"></div>
<div class="a" style="left:649px;top:272px;width:253px;height:1px;background:#c8c8c8"></div>
<span class="t" style="left:543px;top:264px;letter-spacing:-0.168px;">Spatial coordinates</span>
<div class="a" style="left:534px;top:286px;width:368px;height:48px;border:1px solid #828790;background:#fff"></div>
<div class="a" style="left:535px;top:287px;width:365px;height:23px;background:linear-gradient(180deg,#ffffff,#f3f4f6);border-bottom:1px solid #dde0e4"></div>
<div class="a" style="left:656px;top:288px;width:1px;height:44px;background:#e4e6ea"></div>
<div class="a" style="left:777px;top:288px;width:1px;height:44px;background:#e4e6ea"></div>
<div class="a" style="left:899px;top:288px;width:1px;height:22px;background:#e4e6ea"></div>

<span class="t" style="left:542px;top:292px;letter-spacing:-0.241px;">First (x)</span><span class="t" style="left:664px;top:292px;letter-spacing:-0.147px;">Second (z)</span><span class="t" style="left:784px;top:292px">Third (z)</span>
<span class="t" style="left:542px;top:314px">x</span><span class="t" style="left:663px;top:314px">y</span><span class="t" style="left:784px;top:314px">z</span>
<span class="t" style="left:534px;top:339px;letter-spacing:-0.212px;">Geometry shape order:</span>
<div class="combo" style="top:359px"><span>Automatic</span><b></b></div>
<div class="a" style="left:924px;top:68px;width:990px;height:701px;border:1px solid #9a9a9a;border-radius:7px 7px 0 0;background:#f0f0f0"></div>
<svg class="a" style="left:0;top:0" width="1907" height="120"><path d="M924.5,92 L924.5,75 Q924.5,68.5 931.5,68.5 L988,68.5 C1002,68.5 1008,91.5 1022,91.5 L1022,92 Z" fill="url(#tabgradG)"/><path d="M924.5,92 V75 Q924.5,68.5 931.5,68.5 H988 C1002,68.5 1008,91.5 1022,91.5" stroke="#9a9a9a" fill="none"/><path d="M1022,91.5 L1907,91.5" stroke="#9a9a9a" fill="none"/><path d="M1082.5,91 V75 Q1082.5,68.5 1076,68.5 M1130.5,91 V75 Q1130.5,68.5 1124,68.5 M1210.5,91 V75 Q1210.5,68.5 1204,68.5" stroke="#9a9a9a" fill="none"/><path d="M927,116.5 H1907" stroke="#8e8e8e"/></svg>
<svg class="a" style="left:929px;top:73px" width="16" height="16" viewBox="0 0 16 16"><path d="M9 0 L14 12 H5 Z" fill="#b070c0"/><path d="M9 0 L14 12 H10 Z" fill="#d8a0e0"/><circle cx="5" cy="11" r="4.2" fill="#20c0e0"/><circle cx="4" cy="10" r="1.5" fill="#a0f0ff"/></svg>
<span class="t" style="left:948px;top:73px;letter-spacing:-0.452px;">Graphics</span>
<svg class="a" style="left:1015px;top:77px" width="16" height="7" viewBox="0 0 16 7"><rect x="0.5" y="0.5" width="15" height="6" fill="#f0f0f0" stroke="#909090"/><rect x="1.5" y="1.5" width="8" height="4" fill="#80d020"/></svg>
<span class="t" style="left:1035px;top:73px;letter-spacing:-0.652px;">Progress</span>
<svg class="a" style="left:1088px;top:73px" width="15" height="13" viewBox="0 0 15 13"><rect x="0.5" y="0.5" width="14" height="12" fill="#f6f8fa" stroke="#7a90a0"/><path d="M3 3h1M6 3h1M9 3h1M12 3h1M3 6h1M6 6h1M9 6h1M12 6h1M3 9h1M6 9h1M9 9h1M12 9h1" stroke="#8aa0b0"/></svg>
<span class="t" style="left:1108px;top:73px;letter-spacing:-0.344px;">Log</span>
<svg class="a" style="left:1136px;top:74px" width="15" height="12" viewBox="0 0 15 12"><rect x="0.5" y="0.5" width="14" height="11" fill="#f6f8fa" stroke="#8aa0b0"/><path d="M0.5,0.5 L7.5,7 L14.5,0.5 M0.5,11.5 L5.5,6 M14.5,11.5 L9.5,6" stroke="#8aa0b0" fill="none"/></svg>
<span class="t" style="left:1156px;top:73px;letter-spacing:-0.756px;">Messages</span>
<div class="a" style="left:1881px;top:73px;width:10px;height:4px;border:1px solid #5e5e5e;border-radius:1px;background:#fff"></div><div class="a" style="left:1899px;top:73px;width:11px;height:10px;border:1px solid #5e5e5e;background:#fff"></div><div class="a" style="left:1899px;top:75px;width:11px;height:1px;background:#5e5e5e"></div>
<svg class="a" style="left:924px;top:92px" width="983" height="24" viewBox="924 92 983 24">
<g stroke="#808080" stroke-width="1"><path d="M1036.5,96 V114 M1159.5,96 V114 M1274.5,96 V114 M1421.5,96 V114 M1498.5,96 V114"/></g>
<path d="M931,105 Q938,99 945,105 Q938,111 931,105 Z" fill="#eef0f2" stroke="#a0acb4" stroke-width="1.2"/><path d="M933,100 L944,110" stroke="#607a88" stroke-width="1.5"/>
<path d="M953,105 Q960,99 968,105 Q960,111 953,105 Z" fill="#fff" stroke="#4a6470" stroke-width="1.5"/><circle cx="960.5" cy="105" r="2.2" fill="#4a6470"/>
<path d="M990,101 A5.5,5.5 0 1 0 991,107" fill="none" stroke="#4a6a7a" stroke-width="2"/><path d="M987,98 L992,98 L992,103 Z" fill="#4a6a7a"/>
<rect x="1000.5" y="98.5" width="14" height="12" rx="2" fill="none" stroke="#4a6470" stroke-width="1.3" stroke-dasharray="2,1.5"/><path d="M1002,104.5 Q1007.5,100 1013,104.5 Q1007.5,109 1002,104.5 Z" fill="none" stroke="#4a6470" stroke-width="1.1"/><circle cx="1007.5" cy="104.5" r="1.3" fill="#4a6470"/>
<path d="M1022,103 H1030 L1026,107.5 Z" fill="#111"/>
<circle cx="1050" cy="103" r="5" fill="#e8f4f8" stroke="#4a6a7a" stroke-width="1.6"/><path d="M1053.5,106.5 L1057.5,110.5" stroke="#4a6a7a" stroke-width="2.4"/><path d="M1047,103 H1053 M1050,100 V106" stroke="#4a6a7a" stroke-width="1.3"/>
<circle cx="1073" cy="103" r="5" fill="#e8f4f8" stroke="#4a6a7a" stroke-width="1.6"/><path d="M1076.5,106.5 L1080.5,110.5" stroke="#4a6a7a" stroke-width="2.4"/><path d="M1070,103 H1076" stroke="#4a6a7a" stroke-width="1.3"/>
<rect x="1091.5" y="103.5" width="7" height="7" fill="none" stroke="#4a6a7a" stroke-dasharray="1.5,1"/><circle cx="1098" cy="102" r="4.2" fill="none" stroke="#6a8a9a" stroke-width="1.3"/><path d="M1101,105 L1104.5,108.5" stroke="#6a8a9a" stroke-width="2"/><path d="M1096,102 H1100 M1098,100 V104" stroke="#4a6a7a"/>
<rect x="1116.5" y="100.5" width="10" height="9" fill="none" stroke="#20a8d0" stroke-dasharray="1.2,1.2"/><rect x="1119" y="103" width="5" height="4" fill="#60d0f0" stroke="#1a90c0"/><path d="M1121.5,95.5 L1119.5,97.5 H1123.5 Z M1121.5,114.5 L1119.5,112.5 H1123.5 Z M1113,105 L1115,103 V107 Z M1130,105 L1128,103 V107 Z" fill="#20a8d0"/>
<rect x="1138.5" y="96.5" width="14" height="16" fill="#eef6fa" stroke="#5a7a8a"/><path d="M1145.5,99 V110 M1140.5,104.5 H1150.5" stroke="#3a6a80" stroke-width="1.3"/><path d="M1145.5,97.5 L1143,100.5 H1148 Z M1145.5,111.5 L1143,108.5 H1148 Z M1139.5,104.5 L1142.5,102 V107 Z M1151.5,104.5 L1148.5,102 V107 Z" fill="#20b0e0"/>
<path d="M1178,105 V97 M1178,105 L1170,111 M1178,105 L1186,101" stroke-width="1.5" fill="none"/><path d="M1178,105 V97" stroke="#2060e0" stroke-width="1.4"/><path d="M1176,99 L1178,96 L1180,99 Z" fill="#2060e0"/><path d="M1178,105 L1170.5,109.5" stroke="#10b010" stroke-width="1.4"/><path d="M1178,105 L1185,102" stroke="#e04020" stroke-width="1.4"/>
<path d="M1192,103 H1200 L1196,107.5 Z" fill="#111"/>

<path d="M1207.5,96 V113 H1221.0" stroke="#10c010" stroke-width="1.2" fill="none"/><path d="M1207.5,113 H1221.0" stroke="#e0502a" stroke-width="1.2"/><path d="M1206.0,98 L1207.5,95 L1209.0,98 Z" fill="#10c010"/><path d="M1220.0,111.5 L1223.0,113 L1220.0,114.5 Z" fill="#e0502a"/><text x="1210.0" y="108" font-family="Liberation Sans" font-size="9.5" fill="#7a98a8">xy</text>
<path d="M1230.5,96 V113 H1244.0" stroke="#2080e0" stroke-width="1.2" fill="none"/><path d="M1230.5,113 H1244.0" stroke="#10c010" stroke-width="1.2"/><path d="M1229.0,98 L1230.5,95 L1232.0,98 Z" fill="#2080e0"/><path d="M1243.0,111.5 L1246.0,113 L1243.0,114.5 Z" fill="#10c010"/><text x="1233.0" y="108" font-family="Liberation Sans" font-size="9.5" fill="#7a98a8">yz</text>
<path d="M1253.5,96 V113 H1267.0" stroke="#e0502a" stroke-width="1.2" fill="none"/><path d="M1253.5,113 H1267.0" stroke="#2080e0" stroke-width="1.2"/><path d="M1252.0,98 L1253.5,95 L1255.0,98 Z" fill="#e0502a"/><path d="M1266.0,111.5 L1269.0,113 L1266.0,114.5 Z" fill="#2080e0"/><text x="1256.0" y="108" font-family="Liberation Sans" font-size="9.5" fill="#7a98a8">zx</text>
<rect x="1349.5" y="94.5" width="22" height="20" rx="3" fill="#d8d8d8" stroke="#6a6a6a"/>
<rect x="1426.5" y="94.5" width="22" height="20" rx="3" fill="#c8dbe8" stroke="#6a6a6a"/>
<g fill="none" stroke="#8a9aa4" stroke-width="1.1">
<path d="M1285,103 Q1285,99 1292,99 Q1299,99 1299,103 Q1299,109 1292,109 Q1285,109 1285,103 Z" fill="#f0f4f6"/><rect x="1290" y="102" width="6" height="5" stroke="#3a6a8a" stroke-dasharray="1,1"/>
<path d="M1307,103 Q1307,99 1314,99 Q1320,99 1320,103 Q1320,108 1314,108 Q1307,108 1307,103 Z M1310,106 Q1310,111 1316,111 Q1322,110 1321,106"/>
<path d="M1331,104 Q1331,99 1338,99 Q1345,99 1345,104 Q1345,109 1338,109 Q1331,109 1331,104 Z" fill="#c8d4dc"/>
<path d="M1353,104 Q1353,99 1360,99 Q1367,99 1367,104 Q1367,110 1360,110 Q1353,110 1353,104 Z M1356,101 Q1352,107 1357,110"/>
<path d="M1376,104 Q1376,99 1383,99 Q1390,99 1390,104 Q1390,110 1383,110 Q1376,110 1376,104 Z M1380,99 Q1378,106 1381,110"/>
<path d="M1399,104 Q1399,99 1406,99 Q1413,99 1413,104 Q1413,110 1406,110 Q1399,110 1399,104 Z M1402,100 Q1400,106 1403,110"/>
<path d="M1455,100 L1458,98 H1467 V108 L1464,110 H1455 Z" fill="#f4f6f8" stroke="#c8d0d4"/>
<path d="M1477,100 L1480,98 H1491 V108 L1488,110 H1477 Z M1477,100 H1488 V110 M1488,100 L1491,98" stroke="#6a7a84"/>
</g>
<rect x="1358" y="102" width="5" height="5" fill="#10c8f0"/><rect x="1381" y="102" width="2" height="6" fill="#10c8f0"/><rect x="1404" y="101" width="4" height="4" fill="#1890e0"/>
<path d="M1432,98 L1443,101 L1439,104 V111 L1436,108 V104 Z" fill="#3a6a80"/><circle cx="1440" cy="106" r="2" fill="none" stroke="#fff" stroke-width="0.8"/>
<path d="M1506.5,101.5 H1510 L1511.5,99 H1517 L1518.5,101.5 H1522.5 V111.5 H1506.5 Z" fill="#5a6a74" stroke="#3a4a54"/><circle cx="1514.5" cy="106.5" r="3.3" fill="#8a9aa4" stroke="#2a3a44"/><circle cx="1514.5" cy="106.5" r="1.5" fill="#2a3a44"/>

</svg>
<div class="a" style="left:927px;top:117px;width:980px;height:1px;background:#fafcfd"></div>
<div class="a" style="left:927px;top:118px;width:980px;height:648px;background:linear-gradient(180deg,#7dc5e9 0%,#a6d7ef 45%,#c9e7f5 100%)"></div>
<svg class="a" style="left:1770px;top:125px" width="137" height="30" viewBox="1770 125 137 30">
<text x="1818" y="139" font-family="Liberation Sans" font-size="9" textLength="50" lengthAdjust="spacingAndGlyphs" fill="#cdeaf7">COMSOL</text>
<text x="1783" y="148.3" font-family="Liberation Sans" font-size="8" textLength="85" lengthAdjust="spacingAndGlyphs" fill="#cdeaf7">MULTIPHYSICS</text>
<circle cx="1870.5" cy="145.5" r="0.7" fill="#cdeaf7"/>
<path d="M1875,135 L1884,131.5 L1892.5,132.5 L1894,146 L1886,150.5 L1877,147 Z" fill="#bfe3f5" stroke="#dff2fb" stroke-width="0.8"/>
<path d="M1875,135 L1883.5,138 L1892.5,132.5 M1883.5,138 L1886,150.5" stroke="#e8f6fc" stroke-width="0.8" fill="none"/>
<path d="M1877,137 Q1878,143 1882,145" stroke="#4a9ad0" stroke-width="2" fill="none"/><path d="M1886,138 Q1891,140 1889,146" stroke="#3a8ac8" stroke-width="2.2" fill="none"/>
</svg>
<svg class="a" style="left:0;top:0" width="1907" height="1038" viewBox="0 0 1907 1038">
<path d="M1019.5,331 V339 M1117.5,336 V344 M1216.5,339 V346 M1324.5,343 V349" stroke="#8c8c8c" stroke-width="1" fill="none"/>
<path d="M1028,598 L1349,606.5 M1135.5,601 V607 M1241.5,603 V609 M1027.5,597 V604" stroke="#8c8c8c" stroke-width="1" fill="none"/>
<path d="M1324,349 L1371,550 L1358,605 M1319,368 L1359,602 M1341,412 L1336,432 M1355,478 L1349,498" stroke="#8c8c8c" stroke-width="1" fill="none"/>
<polygon points="1019.8,338.5 1033.1,540.5 1027.4,594.6 1015.4,390.0" fill="#a4a4a4"/>
<polygon points="1033.1,540.5 1360.0,546.9 1348.6,600.0 1027.4,594.6" fill="#bcbcbc"/>
<polygon points="1019.8,338.5 1315.5,347.5 1360.0,546.9 1033.1,540.5" fill="#6f718f"/>
<path d="M1019.8,338.5 L1015.4,390.0 L1027.4,594.6 L1348.6,600.0" stroke="#1a1a1a" stroke-width="1.2" fill="none"/>
<path d="M1360.0,546.9 L1348.6,600.0" stroke="#1a1a1a" stroke-width="1.2" fill="none"/>
<path d="M1033.1,540.5 L1027.4,594.6" stroke="#3a3a3a" stroke-width="0.8" fill="none"/>
<polygon points="1019.8,338.5 1315.5,347.5 1360.0,546.9 1033.1,540.5" fill="none" stroke="#0a14ff" stroke-width="1.3"/>
<polygon points="1042.2,356.9 1092.0,358.4 1095.2,389.1 1044.6,387.7" fill="#878787" stroke="#0a14ff" stroke-width="1.3"/>
<polygon points="1045.3,398.0 1096.2,399.4 1099.5,431.5 1047.8,430.2" fill="#878787" stroke="#0a14ff" stroke-width="1.3"/>
<polygon points="1048.6,440.6 1100.6,441.9 1104.1,475.5 1051.2,474.2" fill="#878787" stroke="#0a14ff" stroke-width="1.3"/>
<polygon points="1052.1,485.1 1105.2,486.3 1108.8,521.4 1054.8,520.3" fill="#878787" stroke="#0a14ff" stroke-width="1.3"/>
<polygon points="1250.2,363.0 1298.8,364.5 1305.3,395.0 1255.9,393.6" fill="#878787" stroke="#0a14ff" stroke-width="1.3"/>
<polygon points="1257.8,403.8 1307.5,405.2 1314.2,437.0 1263.7,435.7" fill="#878787" stroke="#0a14ff" stroke-width="1.3"/>
<polygon points="1265.7,446.0 1316.4,447.3 1323.5,480.5 1271.9,479.3" fill="#878787" stroke="#0a14ff" stroke-width="1.3"/>
<polygon points="1273.9,490.1 1325.8,491.3 1333.2,526.1 1280.4,525.0" fill="#878787" stroke="#0a14ff" stroke-width="1.3"/>
<path d="M1093.6,373.6 L1101.6,373.9 L1109.6,374.1 L1117.6,374.3 L1125.6,374.6 L1133.6,374.8 L1141.6,375.0 L1149.6,375.2 L1157.6,375.5 L1157.6,375.5 L1159.3,375.7 L1160.9,376.1 L1162.4,376.8 L1163.5,377.7 L1164.3,378.7 L1164.7,379.8 L1164.6,380.8 L1164.1,381.8 L1163.2,382.6 L1161.9,383.2 L1160.4,383.6 L1158.7,383.7 L1158.7,383.7 L1153.6,383.6 L1148.6,383.4 L1143.5,383.3 L1138.5,383.1 L1133.4,383.0 L1128.4,382.8 L1123.3,382.7 L1118.3,382.6 L1118.3,382.6 L1116.5,382.7 L1115.0,383.0 L1113.7,383.6 L1112.7,384.5 L1112.2,385.5 L1112.1,386.5 L1112.4,387.6 L1113.2,388.6 L1114.4,389.5 L1115.8,390.2 L1117.5,390.7 L1119.2,390.9 L1119.2,390.9 L1124.3,391.0 L1129.4,391.2 L1134.5,391.3 L1139.5,391.4 L1144.6,391.6 L1149.7,391.7 L1154.8,391.9 L1159.8,392.0 L1159.8,392.0 L1161.6,392.2 L1163.2,392.7 L1164.7,393.4 L1165.9,394.3 L1166.7,395.3 L1167.0,396.4 L1167.0,397.5 L1166.4,398.4 L1165.5,399.3 L1164.2,399.9 L1162.7,400.3 L1161.0,400.4 L1161.0,400.4 L1155.9,400.3 L1150.8,400.1 L1145.7,400.0 L1140.6,399.8 L1135.5,399.7 L1130.4,399.6 L1125.3,399.4 L1120.2,399.3 L1120.2,399.3 L1118.5,399.4 L1116.9,399.8 L1115.6,400.4 L1114.6,401.2 L1114.1,402.2 L1114.0,403.3 L1114.3,404.4 L1115.1,405.5 L1116.3,406.4 L1117.7,407.1 L1119.4,407.6 L1121.2,407.7 L1121.2,407.7 L1126.3,407.9 L1131.4,408.0 L1136.5,408.2 L1141.7,408.3 L1146.8,408.4 L1151.9,408.6 L1157.0,408.7 L1162.1,408.8 L1162.1,408.8 L1163.9,409.0 L1165.6,409.5 L1167.0,410.2 L1168.2,411.1 L1169.0,412.2 L1169.4,413.3 L1169.3,414.4 L1168.8,415.4 L1167.9,416.2 L1166.6,416.9 L1165.0,417.3 L1163.3,417.4 L1163.3,417.4 L1155.1,417.2 L1147.0,416.9 L1138.8,416.7 L1130.7,416.5 L1122.5,416.3 L1114.3,416.1 L1106.1,415.9 L1097.9,415.6" stroke="#24242c" stroke-width="4.5" fill="none" stroke-linejoin="round"/>
<path d="M1093.6,373.6 L1101.6,373.9 L1109.6,374.1 L1117.6,374.3 L1125.6,374.6 L1133.6,374.8 L1141.6,375.0 L1149.6,375.2 L1157.6,375.5 L1157.6,375.5 L1159.3,375.7 L1160.9,376.1 L1162.4,376.8 L1163.5,377.7 L1164.3,378.7 L1164.7,379.8 L1164.6,380.8 L1164.1,381.8 L1163.2,382.6 L1161.9,383.2 L1160.4,383.6 L1158.7,383.7 L1158.7,383.7 L1153.6,383.6 L1148.6,383.4 L1143.5,383.3 L1138.5,383.1 L1133.4,383.0 L1128.4,382.8 L1123.3,382.7 L1118.3,382.6 L1118.3,382.6 L1116.5,382.7 L1115.0,383.0 L1113.7,383.6 L1112.7,384.5 L1112.2,385.5 L1112.1,386.5 L1112.4,387.6 L1113.2,388.6 L1114.4,389.5 L1115.8,390.2 L1117.5,390.7 L1119.2,390.9 L1119.2,390.9 L1124.3,391.0 L1129.4,391.2 L1134.5,391.3 L1139.5,391.4 L1144.6,391.6 L1149.7,391.7 L1154.8,391.9 L1159.8,392.0 L1159.8,392.0 L1161.6,392.2 L1163.2,392.7 L1164.7,393.4 L1165.9,394.3 L1166.7,395.3 L1167.0,396.4 L1167.0,397.5 L1166.4,398.4 L1165.5,399.3 L1164.2,399.9 L1162.7,400.3 L1161.0,400.4 L1161.0,400.4 L1155.9,400.3 L1150.8,400.1 L1145.7,400.0 L1140.6,399.8 L1135.5,399.7 L1130.4,399.6 L1125.3,399.4 L1120.2,399.3 L1120.2,399.3 L1118.5,399.4 L1116.9,399.8 L1115.6,400.4 L1114.6,401.2 L1114.1,402.2 L1114.0,403.3 L1114.3,404.4 L1115.1,405.5 L1116.3,406.4 L1117.7,407.1 L1119.4,407.6 L1121.2,407.7 L1121.2,407.7 L1126.3,407.9 L1131.4,408.0 L1136.5,408.2 L1141.7,408.3 L1146.8,408.4 L1151.9,408.6 L1157.0,408.7 L1162.1,408.8 L1162.1,408.8 L1163.9,409.0 L1165.6,409.5 L1167.0,410.2 L1168.2,411.1 L1169.0,412.2 L1169.4,413.3 L1169.3,414.4 L1168.8,415.4 L1167.9,416.2 L1166.6,416.9 L1165.0,417.3 L1163.3,417.4 L1163.3,417.4 L1155.1,417.2 L1147.0,416.9 L1138.8,416.7 L1130.7,416.5 L1122.5,416.3 L1114.3,416.1 L1106.1,415.9 L1097.9,415.6" stroke="#70728f" stroke-width="2" fill="none" stroke-linejoin="round"/>
<path d="M1252.9,377.6 L1245.0,377.4 L1237.1,377.1 L1229.2,376.9 L1221.3,376.7 L1213.3,376.4 L1205.4,376.2 L1197.5,376.0 L1189.5,375.8 L1189.5,375.8 L1187.9,375.9 L1186.4,376.2 L1185.1,376.8 L1184.2,377.6 L1183.7,378.6 L1183.6,379.7 L1184.0,380.7 L1184.8,381.8 L1186.0,382.6 L1187.4,383.3 L1189.1,383.8 L1190.8,384.0 L1190.8,384.0 L1195.8,384.1 L1200.9,384.3 L1205.9,384.4 L1210.9,384.5 L1215.9,384.7 L1220.9,384.8 L1225.9,385.0 L1230.9,385.1 L1230.9,385.1 L1232.6,385.3 L1234.3,385.8 L1235.8,386.5 L1237.0,387.3 L1237.8,388.4 L1238.2,389.4 L1238.2,390.5 L1237.7,391.5 L1236.8,392.3 L1235.6,392.9 L1234.0,393.3 L1232.4,393.4 L1232.4,393.4 L1227.3,393.3 L1222.3,393.1 L1217.3,393.0 L1212.2,392.8 L1207.2,392.7 L1202.2,392.6 L1197.1,392.4 L1192.1,392.3 L1192.1,392.3 L1190.4,392.4 L1188.9,392.7 L1187.6,393.4 L1186.7,394.2 L1186.2,395.2 L1186.1,396.3 L1186.5,397.4 L1187.3,398.4 L1188.5,399.3 L1190.0,400.0 L1191.6,400.4 L1193.4,400.6 L1193.4,400.6 L1198.4,400.8 L1203.5,400.9 L1208.6,401.1 L1213.6,401.2 L1218.7,401.3 L1223.7,401.5 L1228.8,401.6 L1233.8,401.7 L1233.8,401.7 L1235.6,401.9 L1237.2,402.4 L1238.7,403.1 L1239.9,404.0 L1240.8,405.0 L1241.2,406.1 L1241.1,407.2 L1240.7,408.2 L1239.8,409.1 L1238.5,409.7 L1237.0,410.1 L1235.3,410.2 L1235.3,410.2 L1230.2,410.0 L1225.2,409.9 L1220.1,409.8 L1215.0,409.6 L1209.9,409.5 L1204.8,409.3 L1199.8,409.2 L1194.7,409.1 L1194.7,409.1 L1193.0,409.2 L1191.4,409.6 L1190.1,410.2 L1189.2,411.0 L1188.7,412.0 L1188.6,413.1 L1189.0,414.3 L1189.9,415.3 L1191.1,416.2 L1192.5,416.9 L1194.2,417.4 L1196.0,417.6 L1196.0,417.6 L1204.1,417.8 L1212.2,418.0 L1220.3,418.2 L1228.4,418.4 L1236.5,418.7 L1244.5,418.9 L1252.6,419.1 L1260.7,419.3" stroke="#24242c" stroke-width="4.5" fill="none" stroke-linejoin="round"/>
<path d="M1252.9,377.6 L1245.0,377.4 L1237.1,377.1 L1229.2,376.9 L1221.3,376.7 L1213.3,376.4 L1205.4,376.2 L1197.5,376.0 L1189.5,375.8 L1189.5,375.8 L1187.9,375.9 L1186.4,376.2 L1185.1,376.8 L1184.2,377.6 L1183.7,378.6 L1183.6,379.7 L1184.0,380.7 L1184.8,381.8 L1186.0,382.6 L1187.4,383.3 L1189.1,383.8 L1190.8,384.0 L1190.8,384.0 L1195.8,384.1 L1200.9,384.3 L1205.9,384.4 L1210.9,384.5 L1215.9,384.7 L1220.9,384.8 L1225.9,385.0 L1230.9,385.1 L1230.9,385.1 L1232.6,385.3 L1234.3,385.8 L1235.8,386.5 L1237.0,387.3 L1237.8,388.4 L1238.2,389.4 L1238.2,390.5 L1237.7,391.5 L1236.8,392.3 L1235.6,392.9 L1234.0,393.3 L1232.4,393.4 L1232.4,393.4 L1227.3,393.3 L1222.3,393.1 L1217.3,393.0 L1212.2,392.8 L1207.2,392.7 L1202.2,392.6 L1197.1,392.4 L1192.1,392.3 L1192.1,392.3 L1190.4,392.4 L1188.9,392.7 L1187.6,393.4 L1186.7,394.2 L1186.2,395.2 L1186.1,396.3 L1186.5,397.4 L1187.3,398.4 L1188.5,399.3 L1190.0,400.0 L1191.6,400.4 L1193.4,400.6 L1193.4,400.6 L1198.4,400.8 L1203.5,400.9 L1208.6,401.1 L1213.6,401.2 L1218.7,401.3 L1223.7,401.5 L1228.8,401.6 L1233.8,401.7 L1233.8,401.7 L1235.6,401.9 L1237.2,402.4 L1238.7,403.1 L1239.9,404.0 L1240.8,405.0 L1241.2,406.1 L1241.1,407.2 L1240.7,408.2 L1239.8,409.1 L1238.5,409.7 L1237.0,410.1 L1235.3,410.2 L1235.3,410.2 L1230.2,410.0 L1225.2,409.9 L1220.1,409.8 L1215.0,409.6 L1209.9,409.5 L1204.8,409.3 L1199.8,409.2 L1194.7,409.1 L1194.7,409.1 L1193.0,409.2 L1191.4,409.6 L1190.1,410.2 L1189.2,411.0 L1188.7,412.0 L1188.6,413.1 L1189.0,414.3 L1189.9,415.3 L1191.1,416.2 L1192.5,416.9 L1194.2,417.4 L1196.0,417.6 L1196.0,417.6 L1204.1,417.8 L1212.2,418.0 L1220.3,418.2 L1228.4,418.4 L1236.5,418.7 L1244.5,418.9 L1252.6,419.1 L1260.7,419.3" stroke="#70728f" stroke-width="2" fill="none" stroke-linejoin="round"/>
<path d="M1102.3,458.5 L1110.7,458.7 L1119.1,458.9 L1127.4,459.1 L1135.8,459.3 L1144.2,459.5 L1152.5,459.7 L1160.8,459.9 L1169.2,460.1 L1169.2,460.1 L1171.0,460.3 L1172.7,460.8 L1174.2,461.6 L1175.4,462.5 L1176.2,463.6 L1176.6,464.8 L1176.6,465.9 L1176.0,467.0 L1175.1,467.9 L1173.7,468.6 L1172.1,469.0 L1170.4,469.1 L1170.4,469.1 L1165.1,469.0 L1159.8,468.9 L1154.6,468.8 L1149.3,468.6 L1144.0,468.5 L1138.7,468.4 L1133.5,468.3 L1128.2,468.1 L1128.2,468.1 L1126.4,468.2 L1124.8,468.7 L1123.4,469.3 L1122.4,470.3 L1121.8,471.3 L1121.7,472.5 L1122.1,473.7 L1122.9,474.8 L1124.1,475.8 L1125.7,476.5 L1127.4,477.0 L1129.2,477.2 L1129.2,477.2 L1134.5,477.3 L1139.8,477.5 L1145.1,477.6 L1150.4,477.7 L1155.7,477.8 L1161.0,478.0 L1166.3,478.1 L1171.6,478.2 L1171.6,478.2 L1173.4,478.4 L1175.2,478.9 L1176.7,479.6 L1177.9,480.6 L1178.8,481.7 L1179.2,482.9 L1179.1,484.1 L1178.6,485.2 L1177.6,486.1 L1176.3,486.8 L1174.7,487.2 L1172.9,487.3 L1172.9,487.3 L1167.6,487.2 L1162.2,487.1 L1156.9,487.0 L1151.6,486.9 L1146.3,486.7 L1140.9,486.6 L1135.6,486.5 L1130.3,486.4 L1130.3,486.4 L1128.5,486.5 L1126.9,486.9 L1125.5,487.6 L1124.5,488.6 L1123.9,489.6 L1123.8,490.8 L1124.2,492.0 L1125.0,493.2 L1126.2,494.2 L1127.8,494.9 L1129.5,495.4 L1131.3,495.6 L1131.3,495.6 L1136.7,495.8 L1142.1,495.9 L1147.4,496.0 L1152.8,496.1 L1158.1,496.2 L1163.5,496.3 L1168.8,496.5 L1174.1,496.6 L1174.1,496.6 L1176.0,496.8 L1177.7,497.3 L1179.3,498.0 L1180.5,499.0 L1181.4,500.2 L1181.8,501.4 L1181.7,502.6 L1181.2,503.7 L1180.2,504.6 L1178.8,505.3 L1177.2,505.8 L1175.4,505.9 L1175.4,505.9 L1166.9,505.7 L1158.4,505.5 L1149.9,505.3 L1141.3,505.2 L1132.8,505.0 L1124.2,504.8 L1115.7,504.6 L1107.1,504.4" stroke="#24242c" stroke-width="4.5" fill="none" stroke-linejoin="round"/>
<path d="M1102.3,458.5 L1110.7,458.7 L1119.1,458.9 L1127.4,459.1 L1135.8,459.3 L1144.2,459.5 L1152.5,459.7 L1160.8,459.9 L1169.2,460.1 L1169.2,460.1 L1171.0,460.3 L1172.7,460.8 L1174.2,461.6 L1175.4,462.5 L1176.2,463.6 L1176.6,464.8 L1176.6,465.9 L1176.0,467.0 L1175.1,467.9 L1173.7,468.6 L1172.1,469.0 L1170.4,469.1 L1170.4,469.1 L1165.1,469.0 L1159.8,468.9 L1154.6,468.8 L1149.3,468.6 L1144.0,468.5 L1138.7,468.4 L1133.5,468.3 L1128.2,468.1 L1128.2,468.1 L1126.4,468.2 L1124.8,468.7 L1123.4,469.3 L1122.4,470.3 L1121.8,471.3 L1121.7,472.5 L1122.1,473.7 L1122.9,474.8 L1124.1,475.8 L1125.7,476.5 L1127.4,477.0 L1129.2,477.2 L1129.2,477.2 L1134.5,477.3 L1139.8,477.5 L1145.1,477.6 L1150.4,477.7 L1155.7,477.8 L1161.0,478.0 L1166.3,478.1 L1171.6,478.2 L1171.6,478.2 L1173.4,478.4 L1175.2,478.9 L1176.7,479.6 L1177.9,480.6 L1178.8,481.7 L1179.2,482.9 L1179.1,484.1 L1178.6,485.2 L1177.6,486.1 L1176.3,486.8 L1174.7,487.2 L1172.9,487.3 L1172.9,487.3 L1167.6,487.2 L1162.2,487.1 L1156.9,487.0 L1151.6,486.9 L1146.3,486.7 L1140.9,486.6 L1135.6,486.5 L1130.3,486.4 L1130.3,486.4 L1128.5,486.5 L1126.9,486.9 L1125.5,487.6 L1124.5,488.6 L1123.9,489.6 L1123.8,490.8 L1124.2,492.0 L1125.0,493.2 L1126.2,494.2 L1127.8,494.9 L1129.5,495.4 L1131.3,495.6 L1131.3,495.6 L1136.7,495.8 L1142.1,495.9 L1147.4,496.0 L1152.8,496.1 L1158.1,496.2 L1163.5,496.3 L1168.8,496.5 L1174.1,496.6 L1174.1,496.6 L1176.0,496.8 L1177.7,497.3 L1179.3,498.0 L1180.5,499.0 L1181.4,500.2 L1181.8,501.4 L1181.7,502.6 L1181.2,503.7 L1180.2,504.6 L1178.8,505.3 L1177.2,505.8 L1175.4,505.9 L1175.4,505.9 L1166.9,505.7 L1158.4,505.5 L1149.9,505.3 L1141.3,505.2 L1132.8,505.0 L1124.2,504.8 L1115.7,504.6 L1107.1,504.4" stroke="#70728f" stroke-width="2" fill="none" stroke-linejoin="round"/>
<path d="M1268.6,461.9 L1260.4,461.7 L1252.1,461.5 L1243.9,461.3 L1235.6,461.1 L1227.4,460.9 L1219.1,460.7 L1210.8,460.5 L1202.5,460.3 L1202.5,460.3 L1200.8,460.4 L1199.2,460.8 L1197.9,461.5 L1196.9,462.4 L1196.4,463.4 L1196.4,464.6 L1196.8,465.7 L1197.6,466.8 L1198.9,467.8 L1200.4,468.5 L1202.1,469.0 L1203.9,469.2 L1203.9,469.2 L1209.2,469.4 L1214.4,469.5 L1219.6,469.6 L1224.9,469.7 L1230.1,469.9 L1235.3,470.0 L1240.6,470.1 L1245.8,470.2 L1245.8,470.2 L1247.6,470.4 L1249.3,470.9 L1250.8,471.7 L1252.1,472.6 L1253.0,473.7 L1253.4,474.9 L1253.4,476.1 L1252.9,477.1 L1252.0,478.0 L1250.7,478.7 L1249.1,479.1 L1247.4,479.3 L1247.4,479.3 L1242.1,479.1 L1236.9,479.0 L1231.6,478.9 L1226.4,478.8 L1221.1,478.6 L1215.8,478.5 L1210.6,478.4 L1205.3,478.3 L1205.3,478.3 L1203.5,478.4 L1201.9,478.8 L1200.6,479.5 L1199.7,480.4 L1199.1,481.5 L1199.1,482.7 L1199.5,483.9 L1200.4,485.0 L1201.6,486.0 L1203.2,486.7 L1204.9,487.2 L1206.7,487.4 L1206.7,487.4 L1212.0,487.5 L1217.3,487.7 L1222.6,487.8 L1227.9,487.9 L1233.1,488.0 L1238.4,488.1 L1243.7,488.3 L1248.9,488.4 L1248.9,488.4 L1250.8,488.6 L1252.5,489.1 L1254.1,489.8 L1255.3,490.8 L1256.2,491.9 L1256.7,493.1 L1256.6,494.3 L1256.1,495.4 L1255.2,496.3 L1253.9,497.0 L1252.3,497.4 L1250.6,497.6 L1250.6,497.6 L1245.3,497.5 L1240.0,497.3 L1234.7,497.2 L1229.4,497.1 L1224.1,497.0 L1218.8,496.9 L1213.4,496.7 L1208.1,496.6 L1208.1,496.6 L1206.3,496.7 L1204.7,497.2 L1203.4,497.9 L1202.4,498.8 L1201.9,499.9 L1201.9,501.1 L1202.3,502.3 L1203.1,503.5 L1204.4,504.5 L1206.0,505.2 L1207.7,505.7 L1209.6,505.9 L1209.6,505.9 L1218.0,506.1 L1226.5,506.3 L1234.9,506.5 L1243.4,506.7 L1251.8,506.8 L1260.3,507.0 L1268.7,507.2 L1277.1,507.4" stroke="#24242c" stroke-width="4.5" fill="none" stroke-linejoin="round"/>
<path d="M1268.6,461.9 L1260.4,461.7 L1252.1,461.5 L1243.9,461.3 L1235.6,461.1 L1227.4,460.9 L1219.1,460.7 L1210.8,460.5 L1202.5,460.3 L1202.5,460.3 L1200.8,460.4 L1199.2,460.8 L1197.9,461.5 L1196.9,462.4 L1196.4,463.4 L1196.4,464.6 L1196.8,465.7 L1197.6,466.8 L1198.9,467.8 L1200.4,468.5 L1202.1,469.0 L1203.9,469.2 L1203.9,469.2 L1209.2,469.4 L1214.4,469.5 L1219.6,469.6 L1224.9,469.7 L1230.1,469.9 L1235.3,470.0 L1240.6,470.1 L1245.8,470.2 L1245.8,470.2 L1247.6,470.4 L1249.3,470.9 L1250.8,471.7 L1252.1,472.6 L1253.0,473.7 L1253.4,474.9 L1253.4,476.1 L1252.9,477.1 L1252.0,478.0 L1250.7,478.7 L1249.1,479.1 L1247.4,479.3 L1247.4,479.3 L1242.1,479.1 L1236.9,479.0 L1231.6,478.9 L1226.4,478.8 L1221.1,478.6 L1215.8,478.5 L1210.6,478.4 L1205.3,478.3 L1205.3,478.3 L1203.5,478.4 L1201.9,478.8 L1200.6,479.5 L1199.7,480.4 L1199.1,481.5 L1199.1,482.7 L1199.5,483.9 L1200.4,485.0 L1201.6,486.0 L1203.2,486.7 L1204.9,487.2 L1206.7,487.4 L1206.7,487.4 L1212.0,487.5 L1217.3,487.7 L1222.6,487.8 L1227.9,487.9 L1233.1,488.0 L1238.4,488.1 L1243.7,488.3 L1248.9,488.4 L1248.9,488.4 L1250.8,488.6 L1252.5,489.1 L1254.1,489.8 L1255.3,490.8 L1256.2,491.9 L1256.7,493.1 L1256.6,494.3 L1256.1,495.4 L1255.2,496.3 L1253.9,497.0 L1252.3,497.4 L1250.6,497.6 L1250.6,497.6 L1245.3,497.5 L1240.0,497.3 L1234.7,497.2 L1229.4,497.1 L1224.1,497.0 L1218.8,496.9 L1213.4,496.7 L1208.1,496.6 L1208.1,496.6 L1206.3,496.7 L1204.7,497.2 L1203.4,497.9 L1202.4,498.8 L1201.9,499.9 L1201.9,501.1 L1202.3,502.3 L1203.1,503.5 L1204.4,504.5 L1206.0,505.2 L1207.7,505.7 L1209.6,505.9 L1209.6,505.9 L1218.0,506.1 L1226.5,506.3 L1234.9,506.5 L1243.4,506.7 L1251.8,506.8 L1260.3,507.0 L1268.7,507.2 L1277.1,507.4" stroke="#70728f" stroke-width="2" fill="none" stroke-linejoin="round"/>
<text x="999" y="342" font-family="Liberation Sans" font-size="11.5" fill="#000">0.6</text>
<text x="997.5" y="358" font-family="Liberation Sans" font-size="11.5" fill="#000">0.4</text>
<text x="996" y="374" font-family="Liberation Sans" font-size="11.5" fill="#000">0.2</text>
<text x="1000.5" y="390" font-family="Liberation Sans" font-size="11.5" fill="#000">0</text>
<text x="1000.5" y="404" font-family="Liberation Sans" font-size="11.5" fill="#000">3</text>
<text x="1004" y="468" font-family="Liberation Sans" font-size="11.5" fill="#000">2</text>
<text x="1007" y="535" font-family="Liberation Sans" font-size="11.5" fill="#000">1</text>
<text x="1011.5" y="608" font-family="Liberation Sans" font-size="11.5" fill="#000">0</text>
<text x="1024" y="617" font-family="Liberation Sans" font-size="11.5" fill="#000">0</text>
<text x="1132.5" y="619" font-family="Liberation Sans" font-size="11.5" fill="#000">1</text>
<text x="1239.5" y="620" font-family="Liberation Sans" font-size="11.5" fill="#000">2</text>
<text x="1344.5" y="622" font-family="Liberation Sans" font-size="11.5" fill="#000">3</text>
</svg>
<svg class="a" style="left:955px;top:685px" width="70" height="45" viewBox="955 685 70 45">
<path d="M971,722 L996,722.5" stroke="#ff1a1a" stroke-width="1.8"/><path d="M995,719 L1002,722.5 L995,726 Z" fill="#ff1a1a"/>
<path d="M971,722 L969.5,705" stroke="#20e020" stroke-width="1.8"/><path d="M966,708.5 L968.5,702 L972,708 Z" fill="#20e020"/>
<path d="M971,722 L973.5,702" stroke="#1a1aff" stroke-width="1.8"/><path d="M970.5,704 L974,697.5 L977,704.5 Z" fill="#1a1aff"/>
<text x="1004.5" y="726" font-family="Liberation Sans" font-size="12">x</text><text x="963.5" y="700.5" font-family="Liberation Sans" font-size="12">y</text><text x="972.5" y="697" font-family="Liberation Sans" font-size="12">z</text>
</svg>
<div class="a" style="left:924px;top:772px;width:990px;height:238px;border:1px solid #9a9a9a;border-radius:7px 7px 0 0;background:#f0f0f0"></div>
<svg class="a" style="left:0;top:0" width="1907" height="830">M924.5,796 L924.5,779 Q924.5,772.5 931.5,772.5 L1000,772.5 C1014,772.5 1020,795.5 1034,795.5 L1034,796 Z<path d="M924.5,796 V779 Q924.5,772.5 931.5,772.5 H1000 C1014,772.5 1020,795.5 1034,795.5" stroke="#9a9a9a" fill="none"/><path d="M1034,795.5 L1907,795.5" stroke="#9a9a9a" fill="none"/><path d="M927,820.5 H1907" stroke="#8e8e8e"/></svg>
<svg class="a" style="left:930px;top:777px" width="13" height="16" viewBox="0 0 13 16"><rect x="0.5" y="0.5" width="12" height="15" fill="#f8fbfd" stroke="#7a98b0"/><path d="M2.5 3h1M2.5 5.5h1M2.5 8h1M2.5 10.5h1M2.5 13h1" stroke="#3a8ac0"/><path d="M4.5 3h6M4.5 5.5h6M4.5 8h6M4.5 10.5h6M4.5 13h6" stroke="#8aa8c0"/></svg>
<span class="t" style="left:948px;top:777px;letter-spacing:-0.659px;">Results</span>
<svg class="a" style="left:992px;top:779px" width="12" height="11" viewBox="0 0 12 11"><path d="M1,1.5 L3,0.5 L6,3.5 L9,0.5 L11,1.5 L8,5.5 L11,9.5 L9,10.5 L6,7.5 L3,10.5 L1,9.5 L4,5.5 Z" fill="#fff" stroke="#707070" stroke-width="1"/></svg>
<svg class="a" style="left:924px;top:797px" width="230" height="23" viewBox="924 797 230 23">
<rect x="930.5" y="801.5" width="15" height="15" rx="1.5" fill="#d6e2ea" stroke="#6a8aa0"/><circle cx="934" cy="804.5" r="0.9" fill="#20c020"/><circle cx="938" cy="804.5" r="0.9" fill="#20c020"/><circle cx="942" cy="804.5" r="0.9" fill="#ff8000"/><path d="M934,807 V814 M938,807 V814 M942,807 V814" stroke="#2a4a60" stroke-width="1.3"/><circle cx="934" cy="809" r="1.3" fill="#2a4a60"/><circle cx="938" cy="809" r="1.3" fill="#2a4a60"/><circle cx="942" cy="812" r="1.3" fill="#2a4a60"/>
<text x="953" y="808.5" font-family="Liberation Sans" font-size="7" fill="#909090">8.85</text><text x="953" y="816" font-family="Liberation Sans" font-size="7" fill="#909090">e-12</text>
<path d="M984,801 V809" stroke="#7a6040" stroke-width="1.6"/><path d="M980,809 H988 L990,816 H978 Z" fill="#e8c078"/><path d="M981,811 L980,816 M984,811 V816 M987,811 L988,816" stroke="#b08840" stroke-width="0.7"/>
<path d="M1000,803 L1012,815 M1012,803 L1000,815" stroke="#f07820" stroke-width="2.6"/>
<path d="M1023.5,801 V816.5 H1038" stroke="#5a7a88" stroke-width="1" fill="none"/><path d="M1025,808 Q1028,802 1031,808 Q1034,814 1037,808" stroke="#10c080" stroke-width="1.6" fill="none"/>
<defs><linearGradient id="mag" x1="0" y1="0" x2="1" y2="1"><stop offset="0" stop-color="#ff40e0"/><stop offset="0.5" stop-color="#a020f0"/><stop offset="1" stop-color="#2020c0"/></linearGradient></defs>
<rect x="1046.5" y="801.5" width="14" height="14" fill="url(#mag)" stroke="#3a3a5a"/>
<path d="M1068.5,801.5 H1075.5 V805 M1068.5,801.5 V812.5 H1072 M1072.5,805.5 H1082.5 V816.5 H1072.5 Z" fill="none" stroke="#a0a8ac"/><path d="M1074,811 H1078 M1076,809 L1078,811 L1076,813" stroke="#a0a8ac" fill="none"/>
<path d="M1091.5,803 Q1091.5,801.5 1093,801.5 H1104 V813 H1093 Q1091.5,813 1091.5,811.5 Z" fill="#e6f2fa" stroke="#3a7ab0"/><path d="M1096,807.5 H1101 V805 L1107,808 L1101,811 V808.5 H1096 Z" fill="#20c8e0" stroke="#1890b0" stroke-width="0.6"/>
<rect x="1116.5" y="801.5" width="13" height="14" fill="#fff" stroke="#7a98b0"/><path d="M1116.5,806 H1129.5 M1116.5,810.5 H1129.5 M1121,801.5 V815.5 M1125.5,801.5 V815.5" stroke="#7a98b0"/>
<path d="M1137,807 H1145 L1141,811.5 Z" fill="#111"/>

</svg>
<div class="a" style="left:1881px;top:777px;width:10px;height:4px;border:1px solid #5e5e5e;border-radius:1px;background:#fff"></div><div class="a" style="left:1899px;top:777px;width:11px;height:10px;border:1px solid #5e5e5e;background:#fff"></div><div class="a" style="left:1899px;top:779px;width:11px;height:1px;background:#5e5e5e"></div>
<div class="a" style="left:1561px;top:1012px;width:1px;height:26px;background:#a0a0a0"></div>
<div class="a" style="left:1709px;top:1012px;width:1px;height:26px;background:#a0a0a0"></div>
<span class="t" style="left:1569px;top:1017px;letter-spacing:0.147px;">573 MB | 641 MB</span>
</body></html>
